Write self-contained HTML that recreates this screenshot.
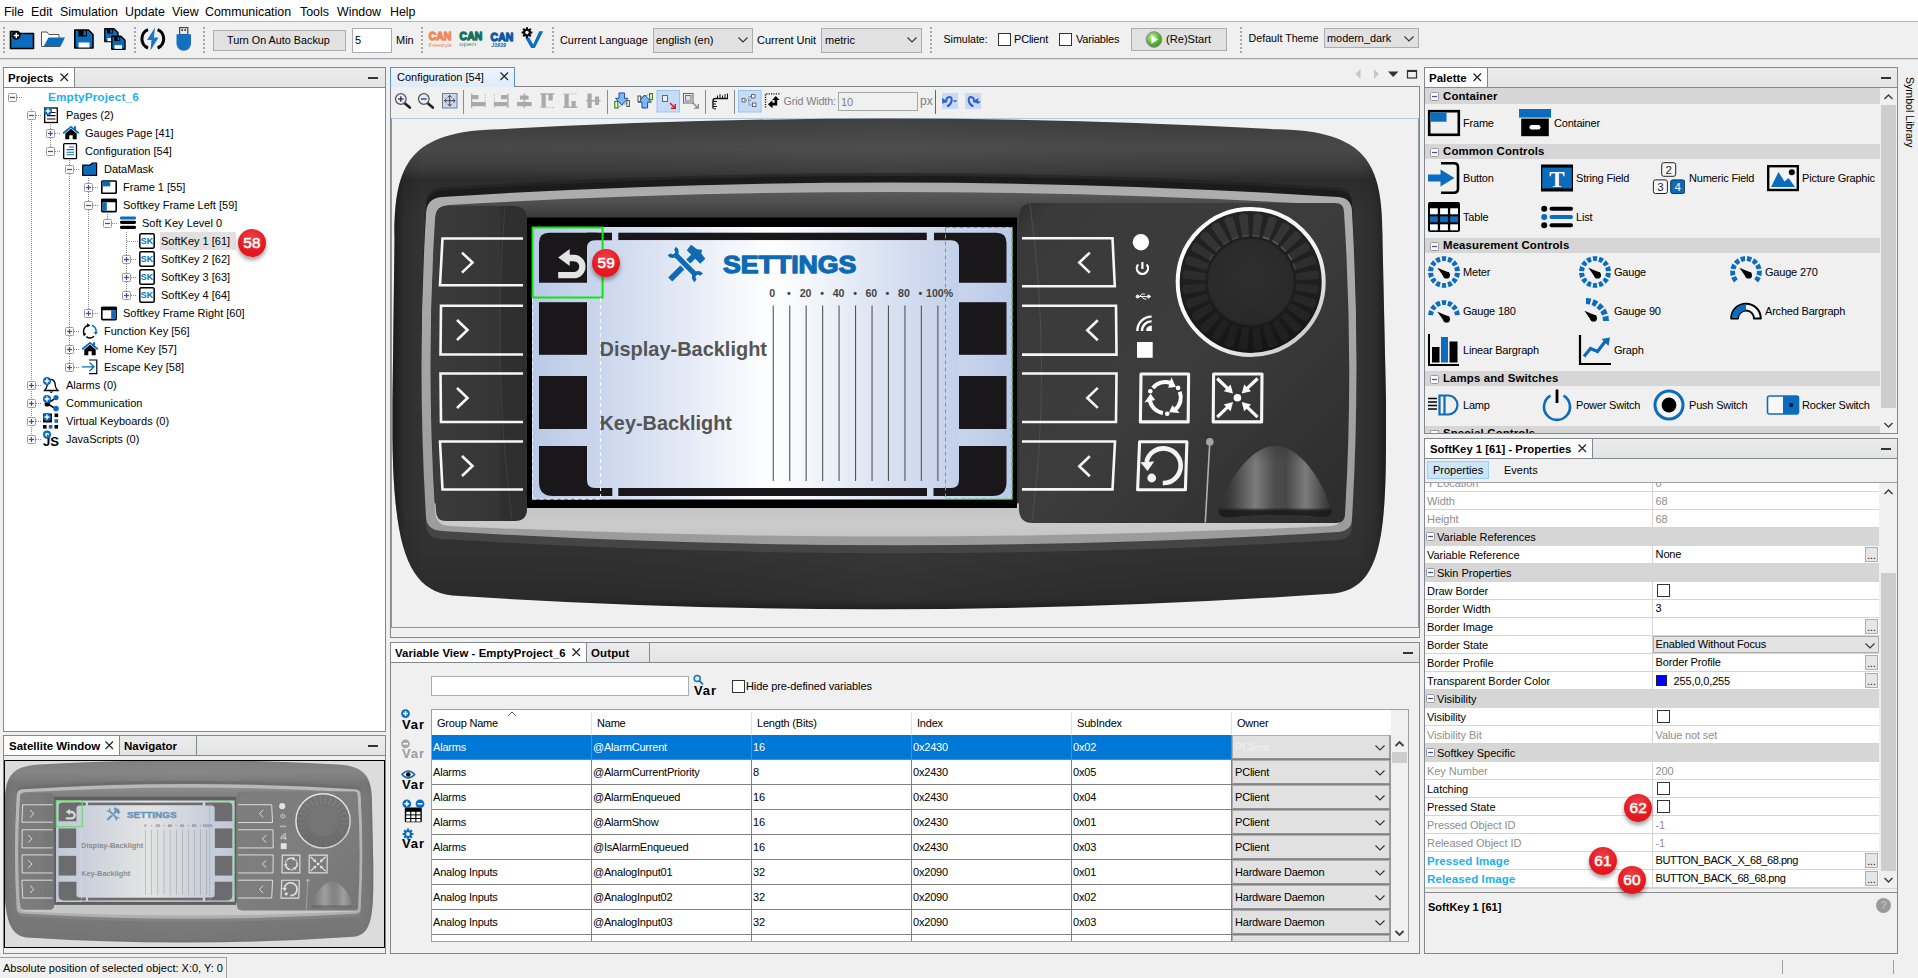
<!DOCTYPE html><html><head><meta charset="utf-8"><title>UI</title><style>
*{box-sizing:border-box;margin:0;padding:0}
html,body{width:1918px;height:978px;overflow:hidden;background:#f0f0f0;font-family:"Liberation Sans",sans-serif;font-size:11px;color:#000}
.a{position:absolute}
.t{position:absolute;white-space:pre;line-height:14px;height:14px}
.b{font-weight:bold}
.menu{position:absolute;left:0;top:0;width:1918px;height:21px;background:#fff}
.menu span{position:absolute;top:4px;font-size:12.4px;line-height:16px;white-space:pre}
.panel{position:absolute;border:1px solid #828790;background:#fff}
.tabhdr{position:absolute;background:linear-gradient(#ececec,#e4e4e4);border-bottom:1px solid #828790}
.tab{position:absolute;background:#fff;border-right:1px solid #828790;font-weight:bold;font-size:11px}
.combo{position:absolute;background:#e1e1e1;border:1px solid #adadad}
.btn{position:absolute;background:#e1e1e1;border:1px solid #adadad;text-align:center}
.chk{position:absolute;width:13px;height:13px;border:1px solid #333;background:#fff}
  .bdg{position:absolute;width:28px;height:28px;border-radius:50%;background:radial-gradient(circle at 50% 32%,#ec4046 0,#e51a20 58%,#dd1016 100%);box-shadow:0 3px 4px rgba(0,0,0,.38);color:#fff;font-size:15.4px;line-height:28px;text-align:center;-webkit-text-stroke:.55px #fff;letter-spacing:.2px}
.sep{position:absolute;width:2px;border-left:2px dotted #a8a8a8}
</style></head><body>
<!-- MENU -->
<div class="menu">
<span style="left:4px">File</span><span style="left:31px">Edit</span><span style="left:60px">Simulation</span><span style="left:125px">Update</span><span style="left:172px">View</span><span style="left:205px">Communication</span><span style="left:300px">Tools</span><span style="left:337px">Window</span><span style="left:390px">Help</span>
</div>
<div class="a" style="left:0;top:21px;width:1918px;height:1px;background:#b4b4b4"></div>
<div class="a" style="left:0;top:58px;width:1918px;height:1px;background:#a6a6a6"></div>
<div class="a" style="left:0;top:59px;width:1918px;height:1px;background:#dcdcdc"></div>
<!-- TOOLBAR -->
<div class="sep" style="left:3px;top:27px;height:26px"></div>
<div class="sep" style="left:134px;top:27px;height:26px"></div>
<div class="sep" style="left:203px;top:27px;height:26px"></div>
<div class="sep" style="left:421px;top:27px;height:26px"></div>
<div class="sep" style="left:552px;top:27px;height:26px"></div>
<div class="sep" style="left:930px;top:27px;height:26px"></div>
<div class="sep" style="left:1240px;top:27px;height:26px"></div>
<svg class="a" style="left:0;top:22px" width="200" height="36" viewBox="0 22 200 36">
 <!-- new project -->
 <path d="M10.5 31.5 H18 L20 33.5 H33.5 V48.5 H10.5 Z" fill="#0b6cbd" stroke="#000" stroke-width="1.6" stroke-linejoin="round"/>
 <circle cx="16.3" cy="35.5" r="4.3" fill="#000"/>
 <path d="M13.6 35.5 H19 M16.3 32.8 V38.2" stroke="#fff" stroke-width="1.5"/>
 <!-- open -->
 <path d="M41.5 46.5 V32 H47 L49 34.5 H59 V38" fill="#fff" stroke="#555" stroke-width="1"/>
 <path d="M41.5 46.5 H44 L48 37.5 H59 V46.5 Z" fill="#fff"/>
 <path d="M43.5 46.5 L48.5 37.5 H65 L60.5 46.5 Z" fill="#0b6cbd"/>
 <path d="M41.5 46.5 H60" stroke="#555" stroke-width="1" fill="none"/>
 <!-- save -->
 <path d="M74.8 30 H88.5 L93 34.5 V48 H74.8 Z" fill="#0b6cbd" stroke="#000" stroke-width="1.6" stroke-linejoin="round"/>
 <rect x="78.5" y="30.5" width="8.5" height="6" fill="#000"/>
 <rect x="83.5" y="31" width="2.4" height="4.5" fill="#0b6cbd"/>
 <rect x="78.5" y="42.5" width="11" height="5" fill="#fff"/>
 <!-- save all -->
 <path d="M104.8 28.8 H114 L118 32.8 V41.5 H104.8 Z" fill="#0b6cbd" stroke="#000" stroke-width="1.4" stroke-linejoin="round"/>
 <rect x="107" y="29" width="6" height="4.5" fill="#000"/>
 <rect x="110.3" y="29.5" width="1.8" height="3.2" fill="#0b6cbd"/>
 <rect x="107.5" y="38" width="5" height="3.2" fill="#fff"/>
 <path d="M111.8 36.3 H121 L125 40.3 V49.2 H111.8 Z" fill="#0b6cbd" stroke="#000" stroke-width="1.4" stroke-linejoin="round"/>
 <rect x="114.2" y="36.6" width="6" height="4.5" fill="#000"/>
 <rect x="117.5" y="37" width="1.8" height="3.2" fill="#0b6cbd"/>
 <rect x="114.5" y="45.2" width="7.5" height="3.6" fill="#fff"/>
 <!-- lightning -->
 <path d="M148 29.6 A10 10 0 0 0 148 48" fill="none" stroke="#000" stroke-width="3"/>
 <path d="M157.6 29.6 A10 10 0 0 1 157.6 48" fill="none" stroke="#000" stroke-width="3"/>
 <path d="M155 27.5 L147 40 H151.5 L150.5 50.5 L158.5 37.5 H153.8 Z" fill="#1878c8"/>
 <!-- usb -->
 <rect x="179.6" y="27.6" width="8.2" height="7" fill="#e8e8e8" stroke="#444" stroke-width="1.2"/>
 <rect x="181.4" y="29.3" width="1.6" height="1.6" fill="#222"/><rect x="184.4" y="29.3" width="1.6" height="1.6" fill="#222"/>
 <path d="M176.5 34.2 H191 V43.5 A7.25 7.25 0 0 1 176.5 43.5 Z" fill="#1371c0"/>
</svg>
<div class="btn" style="left:213px;top:30px;width:133px;height:21px"></div>
<div class="t" style="left:227px;top:33px;font-size:10.8px">Turn On Auto Backup</div>
<div class="a" style="left:352px;top:28px;width:40px;height:25px;background:#fff;border:1px solid #abadb3"></div>
<div class="t" style="left:355px;top:33px">5</div>
<div class="t" style="left:396px;top:33px">Min</div>
<!-- CAN icons -->
<svg class="a" style="left:424px;top:24px" width="124" height="32" viewBox="424 24 124 32">
 <g font-family="Liberation Sans,sans-serif" font-weight="bold" font-size="11.6" stroke-linejoin="round" lengthAdjust="spacingAndGlyphs">
 <text x="428.8" y="40.3" fill="#f08a58" stroke="#f08a58" stroke-width="1.3" textLength="22.6" lengthAdjust="spacingAndGlyphs">CAN</text>
 <text x="459.6" y="40.3" fill="#167060" stroke="#167060" stroke-width="1.3" textLength="22.6" lengthAdjust="spacingAndGlyphs">CAN</text>
 <text x="490.6" y="40.9" fill="#1058a8" stroke="#1058a8" stroke-width="1.3" textLength="22.6" lengthAdjust="spacingAndGlyphs">CAN</text>
 </g>
 <text x="428.8" y="46.6" font-family="Liberation Sans,sans-serif" font-size="5.2" fill="#f08050" textLength="23" lengthAdjust="spacingAndGlyphs">Freestyle</text>
 <text x="459.2" y="46.4" font-family="Liberation Sans,sans-serif" font-size="6" fill="#3c9080" textLength="17" lengthAdjust="spacingAndGlyphs">open</text>
 <text x="491.2" y="46.8" font-family="Liberation Sans,sans-serif" font-weight="bold" font-style="italic" font-size="5.4" fill="#1058a8" textLength="14.8" lengthAdjust="spacingAndGlyphs">J1939</text>
 <!-- gear V -->
 <path d="M525 37.6 H529.2 L533.2 44.4 L539.2 31.2 H543.2 L534.8 48 H531.2 Z" fill="#0a70c4"/>
 <g><circle cx="527" cy="32.6" r="3.9" fill="#000"/><path d="M527 27.2 V38 M521.6 32.6 H532.4 M523.2 28.8 L530.8 36.4 M530.8 28.8 L523.2 36.4" stroke="#000" stroke-width="2"/></g>
 <circle cx="527" cy="32.6" r="1.8" fill="#f0f0f0"/>
</svg>
<div class="t" style="left:560px;top:33px;font-size:10.9px">Current Language</div>
<div class="combo" style="left:653px;top:28px;width:100px;height:25px"></div>
<div class="t" style="left:656px;top:33px;font-size:11px">english (en)</div>
<svg class="a" style="left:737px;top:36px" width="12" height="8"><path d="M1.5 1.5 L6 6 L10.5 1.5" fill="none" stroke="#333" stroke-width="1.1"/></svg>
<div class="t" style="left:757px;top:33px;letter-spacing:-.02px">Current Unit</div>
<div class="combo" style="left:821px;top:28px;width:101px;height:25px"></div>
<div class="t" style="left:825px;top:33px;font-size:11px">metric</div>
<svg class="a" style="left:906px;top:36px" width="12" height="8"><path d="M1.5 1.5 L6 6 L10.5 1.5" fill="none" stroke="#333" stroke-width="1.1"/></svg>
<div class="t" style="left:943.5px;top:32px;font-size:10.6px">Simulate:</div>
<div class="chk" style="left:998px;top:33px"></div>
<div class="t" style="left:1014px;top:32px;letter-spacing:-.2px">PClient</div>
<div class="chk" style="left:1059px;top:33px"></div>
<div class="t" style="left:1076px;top:32px;letter-spacing:-.2px">Variables</div>
<div class="btn" style="left:1131px;top:28px;width:96px;height:23px"></div>
<svg class="a" style="left:1144px;top:30px" width="20" height="20"><defs><radialGradient id="gb" cx=".4" cy=".35" r=".7"><stop offset="0" stop-color="#c8f0a0"/><stop offset=".6" stop-color="#58b838"/><stop offset="1" stop-color="#3a8a28"/></radialGradient></defs><circle cx="10" cy="9.5" r="7.8" fill="url(#gb)" stroke="#8a8a8a" stroke-width="1"/><path d="M7.5 5.3 L14 9.5 L7.5 13.7 Z" fill="#fff" opacity=".95"/></svg>
<div class="t" style="left:1166px;top:32px;font-size:11.1px">(Re)Start</div>
<div class="t" style="left:1248.5px;top:31px;font-size:10.7px">Default Theme</div>
<div class="combo" style="left:1324px;top:28px;width:95px;height:20px"></div>
<div class="t" style="left:1327px;top:31px;font-size:10.9px">modern_dark</div>
<svg class="a" style="left:1403px;top:35px" width="12" height="8"><path d="M1.5 1.5 L6 6 L10.5 1.5" fill="none" stroke="#333" stroke-width="1.1"/></svg>
<!-- STATUS BAR -->
<div class="a" style="left:0;top:957px;width:227px;height:21px;border-top:1px solid #a0a0a0;border-right:1px solid #a0a0a0"></div>
<div class="t" style="left:3px;top:961px">Absolute position of selected object: X:0, Y: 0</div>
<div class="a" style="left:1782px;top:960px;width:1px;height:14px;background:#a0a0a0"></div>
<div class="a" style="left:1893px;top:960px;width:1px;height:14px;background:#a0a0a0"></div>
<!-- Symbol library -->
<div class="a" style="left:1899px;top:72px;width:19px;height:80px"><div style="position:absolute;left:18px;top:5px;transform-origin:0 0;transform:rotate(90deg);white-space:pre;font-size:10.6px;line-height:14px">Symbol Library</div></div>

<!-- PROJECTS PANEL -->
<div class="panel" style="left:3px;top:67px;width:383px;height:665px"></div>
<div class="tabhdr" style="left:4px;top:68px;width:381px;height:20px"></div>
<div class="tab" style="left:4px;top:68px;width:71px;height:19px"></div>
<div class="t b" style="left:8px;top:71px;font-size:11.5px">Projects</div>
<svg class="a" style="left:59px;top:72px" width="11" height="11"><path d="M1.5 1.5 L9 9 M9 1.5 L1.5 9" stroke="#222" stroke-width="1.2"/></svg>
<div class="a" style="left:368px;top:77px;width:10px;height:2px;background:#333"></div>
<div class="a" style="left:31px;top:109px;width:1px;height:330px;background:repeating-linear-gradient(180deg,#8a8a8a 0 1px,transparent 1px 2px)"></div>
<div class="a" style="left:50px;top:124px;width:1px;height:27px;background:repeating-linear-gradient(180deg,#8a8a8a 0 1px,transparent 1px 2px)"></div>
<div class="a" style="left:69px;top:160px;width:1px;height:207px;background:repeating-linear-gradient(180deg,#8a8a8a 0 1px,transparent 1px 2px)"></div>
<div class="a" style="left:88px;top:178px;width:1px;height:135px;background:repeating-linear-gradient(180deg,#8a8a8a 0 1px,transparent 1px 2px)"></div>
<div class="a" style="left:107px;top:214px;width:1px;height:9px;background:repeating-linear-gradient(180deg,#8a8a8a 0 1px,transparent 1px 2px)"></div>
<div class="a" style="left:126px;top:232px;width:1px;height:63px;background:repeating-linear-gradient(180deg,#8a8a8a 0 1px,transparent 1px 2px)"></div>
<div class="a" style="left:160px;top:232px;width:76px;height:18px;background:#e0e0e0"></div>
<div class="a" style="left:17px;top:97px;width:5px;height:1px;background:repeating-linear-gradient(90deg,#8a8a8a 0 1px,transparent 1px 2px)"></div>
<svg class="a" style="left:8px;top:93px" width="9" height="9"><rect x=".5" y=".5" width="8" height="8" rx="1" fill="#fafafa" stroke="#9a9a9a"/><path d="M2 4.5H7" stroke="#3a50a0" stroke-width="1.2"/></svg>
<div class="t b" style="left:48px;top:90px;color:#1cb0f0;font-size:11.8px;letter-spacing:.12px">EmptyProject_6</div>
<div class="a" style="left:36px;top:115px;width:6px;height:1px;background:repeating-linear-gradient(90deg,#8a8a8a 0 1px,transparent 1px 2px)"></div>
<svg class="a" style="left:27px;top:111px" width="9" height="9"><rect x=".5" y=".5" width="8" height="8" rx="1" fill="#fafafa" stroke="#9a9a9a"/><path d="M2 4.5H7" stroke="#3a50a0" stroke-width="1.2"/></svg>
<svg class="a" style="left:43px;top:106px" width="18" height="18" viewBox="0 0 18 18"><rect x="1.7" y="2" width="12.6" height="14.5" fill="#fff" stroke="#000" stroke-width="1.3"/><path d="M8 6.5H12.5M4 9.7H12.5M4 13H12.5" stroke="#000" stroke-width="1.2"/><circle cx="5" cy="5" r="4" fill="#0b6cbd"/><path d="M2.6 5H7.4M5 2.6V7.4" stroke="#fff" stroke-width="1.4"/></svg>
<div class="t" style="left:66px;top:108px">Pages (2)</div>
<div class="a" style="left:55px;top:133px;width:6px;height:1px;background:repeating-linear-gradient(90deg,#8a8a8a 0 1px,transparent 1px 2px)"></div>
<svg class="a" style="left:46px;top:129px" width="9" height="9"><rect x=".5" y=".5" width="8" height="8" rx="1" fill="#fafafa" stroke="#9a9a9a"/><path d="M2 4.5H7" stroke="#3a50a0" stroke-width="1.2"/><path d="M4.5 2V7" stroke="#3a50a0" stroke-width="1.2"/></svg>
<svg class="a" style="left:62px;top:124px" width="18" height="18" viewBox="0 0 18 18"><path d="M13 2.2V6" stroke="#0b6cbd" stroke-width="2"/><path d="M1.2 9.3 L9 2.8 L16.8 9.3" fill="none" stroke="#0b6cbd" stroke-width="1.8"/><path d="M3.3 9.4 L9 4.8 L14.7 9.4 V15.3 H10.7 V11.2 H7.3 V15.3 H3.3 Z" fill="#000"/></svg>
<div class="t" style="left:85px;top:126px">Gauges Page [41]</div>
<div class="a" style="left:55px;top:151px;width:6px;height:1px;background:repeating-linear-gradient(90deg,#8a8a8a 0 1px,transparent 1px 2px)"></div>
<svg class="a" style="left:46px;top:147px" width="9" height="9"><rect x=".5" y=".5" width="8" height="8" rx="1" fill="#fafafa" stroke="#9a9a9a"/><path d="M2 4.5H7" stroke="#3a50a0" stroke-width="1.2"/></svg>
<svg class="a" style="left:62px;top:142px" width="18" height="18" viewBox="0 0 18 18"><rect x="1.7" y="1.7" width="12.8" height="15" fill="#fff" stroke="#000" stroke-width="1.3" rx=".8"/><path d="M7 5H12M4.5 7.6H12M4.5 10.2H12M4.5 12.8H12" stroke="#0b6cbd" stroke-width="1.1"/></svg>
<div class="t" style="left:85px;top:144px">Configuration [54]</div>
<div class="a" style="left:74px;top:169px;width:6px;height:1px;background:repeating-linear-gradient(90deg,#8a8a8a 0 1px,transparent 1px 2px)"></div>
<svg class="a" style="left:65px;top:165px" width="9" height="9"><rect x=".5" y=".5" width="8" height="8" rx="1" fill="#fafafa" stroke="#9a9a9a"/><path d="M2 4.5H7" stroke="#3a50a0" stroke-width="1.2"/></svg>
<svg class="a" style="left:81px;top:160px" width="18" height="18" viewBox="0 0 18 18"><path d="M1.7 5.2 H9 L11.5 3 H15.6 V15.3 H1.7 Z" fill="#0b6cbd" stroke="#000" stroke-width="1.2" stroke-linejoin="round"/></svg>
<div class="t" style="left:104px;top:162px">DataMask</div>
<div class="a" style="left:93px;top:187px;width:6px;height:1px;background:repeating-linear-gradient(90deg,#8a8a8a 0 1px,transparent 1px 2px)"></div>
<svg class="a" style="left:84px;top:183px" width="9" height="9"><rect x=".5" y=".5" width="8" height="8" rx="1" fill="#fafafa" stroke="#9a9a9a"/><path d="M2 4.5H7" stroke="#3a50a0" stroke-width="1.2"/><path d="M4.5 2V7" stroke="#3a50a0" stroke-width="1.2"/></svg>
<svg class="a" style="left:100px;top:178px" width="18" height="18" viewBox="0 0 18 18"><rect x="1.8" y="3" width="14.4" height="12.2" fill="#fff" stroke="#000" stroke-width="1.6" rx=".8"/><rect x="2.6" y="3.8" width="7.6" height="4.6" fill="#0b6cbd"/></svg>
<div class="t" style="left:123px;top:180px">Frame 1 [55]</div>
<div class="a" style="left:93px;top:205px;width:6px;height:1px;background:repeating-linear-gradient(90deg,#8a8a8a 0 1px,transparent 1px 2px)"></div>
<svg class="a" style="left:84px;top:201px" width="9" height="9"><rect x=".5" y=".5" width="8" height="8" rx="1" fill="#fafafa" stroke="#9a9a9a"/><path d="M2 4.5H7" stroke="#3a50a0" stroke-width="1.2"/></svg>
<svg class="a" style="left:100px;top:196px" width="18" height="18" viewBox="0 0 18 18"><rect x="1.8" y="3.6" width="14.4" height="12" fill="#fff" stroke="#000" stroke-width="1.6" rx=".8"/><rect x="1" y="2.8" width="16" height="3.4" fill="#000" rx=".6"/><rect x="2.6" y="6.2" width="4.2" height="8.6" fill="#0b6cbd"/></svg>
<div class="t" style="left:123px;top:198px">Softkey Frame Left [59]</div>
<div class="a" style="left:112px;top:223px;width:6px;height:1px;background:repeating-linear-gradient(90deg,#8a8a8a 0 1px,transparent 1px 2px)"></div>
<svg class="a" style="left:103px;top:219px" width="9" height="9"><rect x=".5" y=".5" width="8" height="8" rx="1" fill="#fafafa" stroke="#9a9a9a"/><path d="M2 4.5H7" stroke="#3a50a0" stroke-width="1.2"/></svg>
<svg class="a" style="left:119px;top:214px" width="18" height="18" viewBox="0 0 18 18"><rect x="1" y="2.6" width="16" height="2.8" rx="1.2" fill="#0b6cbd"/><rect x="1" y="6.7" width="16" height="3.3" rx="1.4" fill="#000"/><rect x="1" y="11.7" width="16" height="3.3" rx="1.4" fill="#000"/></svg>
<div class="t" style="left:142px;top:216px">Soft Key Level 0</div>
<div class="a" style="left:127px;top:241px;width:11px;height:1px;background:repeating-linear-gradient(90deg,#8a8a8a 0 1px,transparent 1px 2px)"></div>
<svg class="a" style="left:138px;top:232px" width="18" height="18" viewBox="0 0 18 18"><rect x="1.8" y="1.8" width="14.4" height="14.4" fill="#fff" stroke="#000" stroke-width="1.5" rx="1.5"/><text x="2.8" y="12.4" font-family="Liberation Sans,sans-serif" font-weight="bold" font-size="9.2" fill="#0b6cbd" textLength="12.4" lengthAdjust="spacingAndGlyphs">SK</text></svg>
<div class="t" style="left:161px;top:234px">SoftKey 1 [61]</div>
<div class="a" style="left:131px;top:259px;width:6px;height:1px;background:repeating-linear-gradient(90deg,#8a8a8a 0 1px,transparent 1px 2px)"></div>
<svg class="a" style="left:122px;top:255px" width="9" height="9"><rect x=".5" y=".5" width="8" height="8" rx="1" fill="#fafafa" stroke="#9a9a9a"/><path d="M2 4.5H7" stroke="#3a50a0" stroke-width="1.2"/><path d="M4.5 2V7" stroke="#3a50a0" stroke-width="1.2"/></svg>
<svg class="a" style="left:138px;top:250px" width="18" height="18" viewBox="0 0 18 18"><rect x="1.8" y="1.8" width="14.4" height="14.4" fill="#fff" stroke="#000" stroke-width="1.5" rx="1.5"/><text x="2.8" y="12.4" font-family="Liberation Sans,sans-serif" font-weight="bold" font-size="9.2" fill="#0b6cbd" textLength="12.4" lengthAdjust="spacingAndGlyphs">SK</text></svg>
<div class="t" style="left:161px;top:252px">SoftKey 2 [62]</div>
<div class="a" style="left:131px;top:277px;width:6px;height:1px;background:repeating-linear-gradient(90deg,#8a8a8a 0 1px,transparent 1px 2px)"></div>
<svg class="a" style="left:122px;top:273px" width="9" height="9"><rect x=".5" y=".5" width="8" height="8" rx="1" fill="#fafafa" stroke="#9a9a9a"/><path d="M2 4.5H7" stroke="#3a50a0" stroke-width="1.2"/><path d="M4.5 2V7" stroke="#3a50a0" stroke-width="1.2"/></svg>
<svg class="a" style="left:138px;top:268px" width="18" height="18" viewBox="0 0 18 18"><rect x="1.8" y="1.8" width="14.4" height="14.4" fill="#fff" stroke="#000" stroke-width="1.5" rx="1.5"/><text x="2.8" y="12.4" font-family="Liberation Sans,sans-serif" font-weight="bold" font-size="9.2" fill="#0b6cbd" textLength="12.4" lengthAdjust="spacingAndGlyphs">SK</text></svg>
<div class="t" style="left:161px;top:270px">SoftKey 3 [63]</div>
<div class="a" style="left:131px;top:295px;width:6px;height:1px;background:repeating-linear-gradient(90deg,#8a8a8a 0 1px,transparent 1px 2px)"></div>
<svg class="a" style="left:122px;top:291px" width="9" height="9"><rect x=".5" y=".5" width="8" height="8" rx="1" fill="#fafafa" stroke="#9a9a9a"/><path d="M2 4.5H7" stroke="#3a50a0" stroke-width="1.2"/><path d="M4.5 2V7" stroke="#3a50a0" stroke-width="1.2"/></svg>
<svg class="a" style="left:138px;top:286px" width="18" height="18" viewBox="0 0 18 18"><rect x="1.8" y="1.8" width="14.4" height="14.4" fill="#fff" stroke="#000" stroke-width="1.5" rx="1.5"/><text x="2.8" y="12.4" font-family="Liberation Sans,sans-serif" font-weight="bold" font-size="9.2" fill="#0b6cbd" textLength="12.4" lengthAdjust="spacingAndGlyphs">SK</text></svg>
<div class="t" style="left:161px;top:288px">SoftKey 4 [64]</div>
<div class="a" style="left:93px;top:313px;width:6px;height:1px;background:repeating-linear-gradient(90deg,#8a8a8a 0 1px,transparent 1px 2px)"></div>
<svg class="a" style="left:84px;top:309px" width="9" height="9"><rect x=".5" y=".5" width="8" height="8" rx="1" fill="#fafafa" stroke="#9a9a9a"/><path d="M2 4.5H7" stroke="#3a50a0" stroke-width="1.2"/><path d="M4.5 2V7" stroke="#3a50a0" stroke-width="1.2"/></svg>
<svg class="a" style="left:100px;top:304px" width="18" height="18" viewBox="0 0 18 18"><rect x="1.8" y="3.6" width="14.4" height="12" fill="#fff" stroke="#000" stroke-width="1.6" rx=".8"/><rect x="1" y="2.8" width="16" height="3.4" fill="#000" rx=".6"/><rect x="11.2" y="6.2" width="4.2" height="8.6" fill="#0b6cbd"/></svg>
<div class="t" style="left:123px;top:306px">Softkey Frame Right [60]</div>
<div class="a" style="left:74px;top:331px;width:6px;height:1px;background:repeating-linear-gradient(90deg,#8a8a8a 0 1px,transparent 1px 2px)"></div>
<svg class="a" style="left:65px;top:327px" width="9" height="9"><rect x=".5" y=".5" width="8" height="8" rx="1" fill="#fafafa" stroke="#9a9a9a"/><path d="M2 4.5H7" stroke="#3a50a0" stroke-width="1.2"/><path d="M4.5 2V7" stroke="#3a50a0" stroke-width="1.2"/></svg>
<svg class="a" style="left:81px;top:322px" width="18" height="18" viewBox="0 0 18 18"><path d="M7.2 3.3 A6 6 0 0 0 3.6 12.6" fill="none" stroke="#000" stroke-width="1.5"/><path d="M5.3 14.6 A6 6 0 0 0 13 14.2" fill="none" stroke="#000" stroke-width="1.5"/><path d="M10.8 3.3 A6 6 0 0 1 15 10.5" fill="none" stroke="#0b6cbd" stroke-width="1.5"/><path d="M6 1.2 L9.4 3.2 L6.4 5.6 Z" fill="#000"/><path d="M12.8 10 L16.8 10 L14.8 13 Z" fill="#0b6cbd"/><path d="M1.8 11.2 L5.4 11.6 L3 14.4Z" fill="#000"/></svg>
<div class="t" style="left:104px;top:324px">Function Key [56]</div>
<div class="a" style="left:74px;top:349px;width:6px;height:1px;background:repeating-linear-gradient(90deg,#8a8a8a 0 1px,transparent 1px 2px)"></div>
<svg class="a" style="left:65px;top:345px" width="9" height="9"><rect x=".5" y=".5" width="8" height="8" rx="1" fill="#fafafa" stroke="#9a9a9a"/><path d="M2 4.5H7" stroke="#3a50a0" stroke-width="1.2"/><path d="M4.5 2V7" stroke="#3a50a0" stroke-width="1.2"/></svg>
<svg class="a" style="left:81px;top:340px" width="18" height="18" viewBox="0 0 18 18"><path d="M13 2.2V6" stroke="#0b6cbd" stroke-width="2"/><path d="M1.2 9.3 L9 2.8 L16.8 9.3" fill="none" stroke="#0b6cbd" stroke-width="1.8"/><path d="M3.3 9.4 L9 4.8 L14.7 9.4 V15.3 H10.7 V11.2 H7.3 V15.3 H3.3 Z" fill="#000"/></svg>
<div class="t" style="left:104px;top:342px">Home Key [57]</div>
<div class="a" style="left:74px;top:367px;width:6px;height:1px;background:repeating-linear-gradient(90deg,#8a8a8a 0 1px,transparent 1px 2px)"></div>
<svg class="a" style="left:65px;top:363px" width="9" height="9"><rect x=".5" y=".5" width="8" height="8" rx="1" fill="#fafafa" stroke="#9a9a9a"/><path d="M2 4.5H7" stroke="#3a50a0" stroke-width="1.2"/><path d="M4.5 2V7" stroke="#3a50a0" stroke-width="1.2"/></svg>
<svg class="a" style="left:81px;top:358px" width="18" height="18" viewBox="0 0 18 18"><path d="M8 2 H15.8 V15.6 H8" fill="none" stroke="#000" stroke-width="1.2"/><path d="M1 8.8 H13 M8.5 4.5 L13 8.8 L8.5 13.2" fill="none" stroke="#0b6cbd" stroke-width="1.3"/></svg>
<div class="t" style="left:104px;top:360px">Escape Key [58]</div>
<div class="a" style="left:36px;top:385px;width:6px;height:1px;background:repeating-linear-gradient(90deg,#8a8a8a 0 1px,transparent 1px 2px)"></div>
<svg class="a" style="left:27px;top:381px" width="9" height="9"><rect x=".5" y=".5" width="8" height="8" rx="1" fill="#fafafa" stroke="#9a9a9a"/><path d="M2 4.5H7" stroke="#3a50a0" stroke-width="1.2"/><path d="M4.5 2V7" stroke="#3a50a0" stroke-width="1.2"/></svg>
<svg class="a" style="left:42px;top:376px" width="18" height="18" viewBox="0 0 18 18"><path d="M9 3.5 C5.5 3.5 5.2 7 5 10 C4.8 12.5 3.2 13.5 2.5 14.5 H16 C15.2 13.5 13.6 12.5 13.4 10 C13.2 7 12.5 3.5 9 3.5 Z" fill="#fff" stroke="#000" stroke-width="1.3"/><path d="M7.5 15.5 A1.8 1.8 0 0 0 11 15.5" fill="#000"/><circle cx="5" cy="5" r="4" fill="#0b6cbd"/><path d="M2.6 5H7.4M5 2.6V7.4" stroke="#fff" stroke-width="1.4"/></svg>
<div class="t" style="left:66px;top:378px">Alarms (0)</div>
<div class="a" style="left:36px;top:403px;width:6px;height:1px;background:repeating-linear-gradient(90deg,#8a8a8a 0 1px,transparent 1px 2px)"></div>
<svg class="a" style="left:27px;top:399px" width="9" height="9"><rect x=".5" y=".5" width="8" height="8" rx="1" fill="#fafafa" stroke="#9a9a9a"/><path d="M2 4.5H7" stroke="#3a50a0" stroke-width="1.2"/><path d="M4.5 2V7" stroke="#3a50a0" stroke-width="1.2"/></svg>
<svg class="a" style="left:42px;top:394px" width="18" height="18" viewBox="0 0 18 18"><path d="M14 4 L5 9.5 L14 15" fill="none" stroke="#000" stroke-width="1.5"/><circle cx="5.2" cy="10" r="2.6" fill="#000"/><circle cx="14" cy="3.6" r="2.6" fill="#0b6cbd"/><circle cx="14" cy="14.6" r="2.8" fill="#0b6cbd"/><circle cx="5" cy="5" r="4" fill="#0b6cbd"/><path d="M2.6 5H7.4M5 2.6V7.4" stroke="#fff" stroke-width="1.4"/></svg>
<div class="t" style="left:66px;top:396px">Communication</div>
<div class="a" style="left:36px;top:421px;width:6px;height:1px;background:repeating-linear-gradient(90deg,#8a8a8a 0 1px,transparent 1px 2px)"></div>
<svg class="a" style="left:27px;top:417px" width="9" height="9"><rect x=".5" y=".5" width="8" height="8" rx="1" fill="#fafafa" stroke="#9a9a9a"/><path d="M2 4.5H7" stroke="#3a50a0" stroke-width="1.2"/><path d="M4.5 2V7" stroke="#3a50a0" stroke-width="1.2"/></svg>
<svg class="a" style="left:42px;top:412px" width="18" height="18" viewBox="0 0 18 18"><rect x="1" y="1.5" width="9" height="9" fill="#000"/><rect x="12.5" y="1.5" width="3.6" height="3.6" fill="#000"/><rect x="12.5" y="7.2" width="3.6" height="3.6" fill="#0b6cbd"/><rect x="1" y="13" width="3.6" height="3.6" fill="#000"/><rect x="6.8" y="13" width="3.6" height="3.6" fill="#0b6cbd"/><rect x="12.5" y="13" width="3.6" height="3.6" fill="#000"/><circle cx="5" cy="5" r="4" fill="#0b6cbd"/><path d="M2.6 5H7.4M5 2.6V7.4" stroke="#fff" stroke-width="1.4"/></svg>
<div class="t" style="left:66px;top:414px">Virtual Keyboards (0)</div>
<div class="a" style="left:36px;top:439px;width:6px;height:1px;background:repeating-linear-gradient(90deg,#8a8a8a 0 1px,transparent 1px 2px)"></div>
<svg class="a" style="left:27px;top:435px" width="9" height="9"><rect x=".5" y=".5" width="8" height="8" rx="1" fill="#fafafa" stroke="#9a9a9a"/><path d="M2 4.5H7" stroke="#3a50a0" stroke-width="1.2"/><path d="M4.5 2V7" stroke="#3a50a0" stroke-width="1.2"/></svg>
<svg class="a" style="left:42px;top:430px" width="18" height="18" viewBox="0 0 18 18"><text x="1" y="16.3" font-family="Liberation Sans,sans-serif" font-weight="bold" font-size="13.5" fill="#000" textLength="16" lengthAdjust="spacingAndGlyphs">JS</text><circle cx="5" cy="4.6" r="4" fill="#0b6cbd"/><circle cx="5" cy="4.6" r="1.9" fill="#fff"/><path d="M5 4.6 L8 8.4" stroke="#0b6cbd" stroke-width="1.4"/></svg>
<div class="t" style="left:66px;top:432px">JavaScripts (0)</div>
<div class="bdg" style="left:238px;top:229px">58</div>
<!-- SATELLITE PANEL -->
<div class="panel" style="left:3px;top:735px;width:383px;height:219px;background:#f0f0f0"></div>
<div class="tabhdr" style="left:4px;top:736px;width:381px;height:20px"></div>
<div class="tab" style="left:4px;top:736px;width:116px;height:19px"></div>
<div class="t b" style="left:9px;top:739px;font-size:11.5px">Satellite Window</div>
<svg class="a" style="left:104px;top:740px" width="11" height="11"><path d="M1.5 1.5 L9 9 M9 1.5 L1.5 9" stroke="#222" stroke-width="1.2"/></svg>
<div class="a" style="left:120px;top:736px;width:77px;height:19px;border-right:1px solid #828790"></div>
<div class="t b" style="left:124px;top:739px;font-size:11.5px">Navigator</div>
<div class="a" style="left:368px;top:745px;width:10px;height:2px;background:#333"></div>
<div class="a" style="left:4px;top:760px;width:381px;height:188px;border:1px solid #000;background:#f0f0f0;overflow:hidden">
<svg class="a" style="left:-0.8px;top:-1px" width="381.2" height="189.5" viewBox="392 118 1026 510"><use href="#dev" x="392" y="118" width="1026" height="510"/><rect x="532.6" y="227.5" width="70" height="70" fill="none" stroke="#12e612" stroke-width="3"/><path d="M600.6 298 V497" stroke="#fff" stroke-width="2" stroke-dasharray="4 3"/><path d="M532.5 499 H600" stroke="#fff" stroke-width="2.4" stroke-dasharray="4 3"/><rect x="945.5" y="227.5" width="66.5" height="271.5" fill="none" stroke="#20e020" stroke-width="2.4" stroke-dasharray="4 3"/></svg>
<div class="a" style="left:0;top:0;width:381px;height:188px;background:rgba(198,198,198,.48)"></div>
</div>
<svg class="a" style="left:0;top:0;width:0;height:0" width="0" height="0"><symbol id="dev" viewBox="392 118 1026 510" overflow="visible"><defs>
<linearGradient id="gBody" x1="0" y1="118" x2="0" y2="609" gradientUnits="userSpaceOnUse">
<stop offset="0" stop-color="#3b3b3b"/><stop offset=".063" stop-color="#494949"/><stop offset=".105" stop-color="#3b3b3b"/><stop offset=".125" stop-color="#2c2c2c"/>
<stop offset=".2" stop-color="#333"/><stop offset=".8" stop-color="#333"/>
<stop offset=".89" stop-color="#303030"/><stop offset=".98" stop-color="#2a2a2a"/><stop offset="1" stop-color="#1b1b1b"/></linearGradient>
<linearGradient id="gSide" x1="393" y1="0" x2="1387" y2="0" gradientUnits="userSpaceOnUse">
<stop offset="0" stop-color="#000" stop-opacity=".45"/><stop offset=".012" stop-color="#000" stop-opacity=".1"/><stop offset=".03" stop-color="#000" stop-opacity="0"/><stop offset=".5" stop-color="#fff" stop-opacity=".03"/><stop offset=".97" stop-color="#000" stop-opacity="0"/><stop offset=".988" stop-color="#000" stop-opacity=".1"/><stop offset="1" stop-color="#000" stop-opacity=".45"/></linearGradient>
<linearGradient id="gBezel" x1="0" y1="182" x2="0" y2="546" gradientUnits="userSpaceOnUse">
<stop offset="0" stop-color="#a6a6a6"/><stop offset=".03" stop-color="#adadad"/><stop offset=".5" stop-color="#a4a4a4"/><stop offset="1" stop-color="#9b9b9b"/></linearGradient>
<linearGradient id="gInner" x1="0" y1="192" x2="0" y2="537" gradientUnits="userSpaceOnUse">
<stop offset="0" stop-color="#5a5a5a"/><stop offset=".035" stop-color="#4c4c4c"/><stop offset=".075" stop-color="#3a3a3a"/><stop offset=".9" stop-color="#303030"/><stop offset=".905" stop-color="#c4c4c4"/><stop offset=".96" stop-color="#cbcbcb"/><stop offset="1" stop-color="#c6c6c6"/></linearGradient>
<linearGradient id="gCol" x1="436" y1="0" x2="527" y2="0" gradientUnits="userSpaceOnUse">
<stop offset="0" stop-color="#3b3b3b"/><stop offset=".7" stop-color="#353535"/><stop offset=".72" stop-color="#2f2f2f"/><stop offset="1" stop-color="#2e2e2e"/></linearGradient>
<linearGradient id="gRP" x1="1019" y1="203" x2="1345" y2="523" gradientUnits="userSpaceOnUse">
<stop offset="0" stop-color="#2e2e2e"/><stop offset=".06" stop-color="#3a3a3a"/><stop offset=".5" stop-color="#3c3c3c"/><stop offset="1" stop-color="#2c2c2c"/></linearGradient>
<linearGradient id="gScr" x1="532" y1="0" x2="1012" y2="0" gradientUnits="userSpaceOnUse">
<stop offset="0" stop-color="#b9c9e7"/><stop offset=".5" stop-color="#fff"/><stop offset="1" stop-color="#b9c9e7"/></linearGradient>
<linearGradient id="gFrm" x1="587" y1="0" x2="959" y2="0" gradientUnits="userSpaceOnUse">
<stop offset="0" stop-color="#c6d3eb"/><stop offset=".5" stop-color="#fff"/><stop offset="1" stop-color="#c2d0ea"/></linearGradient>
<radialGradient id="gKnob" cx="1250" cy="275" r="60" gradientUnits="userSpaceOnUse"><stop offset="0" stop-color="#2e2e2e"/><stop offset=".7" stop-color="#2a2a2a"/><stop offset="1" stop-color="#242424"/></radialGradient>
<linearGradient id="gRing" x1="1190" y1="215" x2="1310" y2="350" gradientUnits="userSpaceOnUse"><stop offset="0" stop-color="#fff"/><stop offset=".6" stop-color="#f4f4f4"/><stop offset="1" stop-color="#c4c4c4"/></linearGradient>
<linearGradient id="gKnobR" x1="0" y1="207" x2="0" y2="357" gradientUnits="userSpaceOnUse"><stop offset="0" stop-color="#242424"/><stop offset=".5" stop-color="#1e1e1e"/><stop offset="1" stop-color="#141414"/></linearGradient>
<linearGradient id="gDome" x1="1218" y1="0" x2="1332" y2="0" gradientUnits="userSpaceOnUse"><stop offset="0" stop-color="#2e2e2e"/><stop offset=".1" stop-color="#3a3a3a"/><stop offset=".33" stop-color="#7c7c7c"/><stop offset=".5" stop-color="#4c4c4c"/><stop offset=".6" stop-color="#484848"/><stop offset=".77" stop-color="#7c7c7c"/><stop offset=".93" stop-color="#454545"/><stop offset="1" stop-color="#2e2e2e"/></linearGradient>
<linearGradient id="gDomeV" x1="0" y1="446" x2="0" y2="517.5" gradientUnits="userSpaceOnUse"><stop offset="0" stop-color="#333" stop-opacity=".35"/><stop offset=".25" stop-color="#333" stop-opacity="0"/><stop offset=".86" stop-color="#111" stop-opacity="0"/><stop offset=".91" stop-color="#181818" stop-opacity=".9"/><stop offset="1" stop-color="#1c1c1c" stop-opacity=".95"/></linearGradient>
</defs>
<path d="M392.5 400 L394.5 240 C394 165 408 131 500 129.3 Q888.5 107.7 1277 129.3 C1369 131 1383 165 1382.5 240 L1386 400 L1386 440 C1386 545 1378 588 1334 593.6 Q888 624 452 595.6 C408 590 394 548 392.5 440 Z" fill="url(#gBody)"/>
<path d="M392.5 400 L394.5 240 C394 165 408 131 500 129.3 Q888.5 107.7 1277 129.3 C1369 131 1383 165 1382.5 240 L1386 400 L1386 440 C1386 545 1378 588 1334 593.6 Q888 624 452 595.6 C408 590 394 548 392.5 440 Z" fill="url(#gSide)"/>
<path d="M426 215 Q426 198 442 197 Q890 168 1338 197 Q1352 198 1352 212 Q1361 365 1352 518 Q1352 531 1338 532 Q890 559 442 531 Q426 530 426 516 Q417 365 426 215 Z" fill="#1b1b1b" transform="translate(0,-6.5)"/>
<path d="M426 215 Q426 198 442 197 Q890 168 1338 197 Q1352 198 1352 212 Q1361 365 1352 518 Q1352 531 1338 532 Q890 559 442 531 Q426 530 426 516 Q417 365 426 215 Z" fill="#1b1b1b" opacity=".5" transform="translate(0,-9.5)"/>
<path d="M426 215 Q426 198 442 197 Q890 168 1338 197 Q1352 198 1352 212 Q1361 365 1352 518 Q1352 531 1338 532 Q890 559 442 531 Q426 530 426 516 Q417 365 426 215 Z" fill="#454545" transform="translate(0,8)"/>
<path d="M426 215 Q426 198 442 197 Q890 168 1338 197 Q1352 198 1352 212 Q1361 365 1352 518 Q1352 531 1338 532 Q890 559 442 531 Q426 530 426 516 Q417 365 426 215 Z" fill="url(#gBezel)"/>
<path d="M435 220 Q435 206 449 205 Q890 179 1331 205 Q1343 206 1343 218 Q1352 365 1343 512 Q1343 525 1331 526 Q890 547 449 526 Q435 525 435 510 Q426 365 435 220 Z" fill="url(#gInner)"/>
<path d="M446 206 H513 Q527 206 527 220 V509 Q527 521 515 521 H446 Q436 521 436 511 Q426 365 436 216 Q436 206 446 206 Z" fill="url(#gCol)"/>
<path d="M505 207 Q492 365 512 520" fill="none" stroke="#4a4a4a" stroke-width="1" opacity=".6"/>
<path d="M1033 203 H1335 Q1344 203 1344 212 Q1354 365 1345 514 Q1345 523 1336 523 H1033 Q1019 523 1019 509 V217 Q1019 203 1033 203 Z" fill="url(#gRP)"/>
<path d="M1030 204 Q1052 365 1032 522" fill="none" stroke="#555" stroke-width="1" opacity=".7"/>
<rect x="527" y="217.5" width="490" height="290.5" fill="#000"/>
<rect x="532" y="227" width="480.5" height="272.5" fill="url(#gScr)"/>
<path d="M549 232.7 H597 V282.7 H539 V242.7 Q539 232.7 549 232.7 Z" fill="#1a171b"/>
<rect x="539" y="302.2" width="48" height="52.6" fill="#1a171b"/>
<rect x="539" y="376" width="48" height="53" fill="#1a171b"/>
<path d="M539 446 H597 V478 H612.3 V496 H553 Q539 496 539 482 Z" fill="#1a171b"/>
<rect x="587" y="232.7" width="25" height="17.5" fill="#1a171b"/>
<rect x="618.3" y="232.7" width="308.5" height="7.5" fill="#1a171b"/>
<rect x="618.3" y="488" width="308.7" height="8" fill="#1a171b"/>
<path d="M934 232.7 H996.5 Q1006.5 232.7 1006.5 242.7 V282.7 H949 V250 H934 Z" fill="#1a171b"/>
<rect x="959" y="302.2" width="47.5" height="52.6" fill="#1a171b"/>
<rect x="959" y="376" width="47.5" height="53" fill="#1a171b"/>
<path d="M949 446 H1006.5 V482 Q1006.5 496 992.5 496 H933.5 V478 H949 Z" fill="#1a171b"/>
<path d="M595 240.2 H951 Q959 240.2 959 248 V480 Q959 488 951 488 H595 Q587 488 587 480 V248 Q587 240.2 595 240.2 Z" fill="url(#gFrm)"/>
<path d="M558.2 275.2 H573.8 A8.6 8.6 0 0 0 573.8 258 H569" fill="none" stroke="#e4e4e4" stroke-width="6.3"/><path d="M558.2 257.5 L569.7 249 V266 Z" fill="#e4e4e4"/>
<g transform="rotate(-45 685.3 264.5)" fill="#0f6ab4"><rect x="664" y="261.6" width="33" height="5.8"/><path d="M696.4 255.5 L703.4 254.5 L704.4 262 L707.5 266 L704.4 268 L703.6 274.5 H696.4 Z"/></g>
<g transform="rotate(45 685.3 264.5)"><path d="M668 264.5 H703" stroke="#eef2fa" stroke-width="8.4" fill="none"/><path d="M670 264.5 H700.6" stroke="#0f6ab4" stroke-width="5.2" fill="none"/><path d="M666.6 260.4 A4.2 4.2 0 1 1 666.6 268.6" fill="none" stroke="#0f6ab4" stroke-width="3.6"/><path d="M704 260.4 A4.2 4.2 0 1 0 704 268.6" fill="none" stroke="#0f6ab4" stroke-width="3.6"/></g>
<text x="723" y="273.2" font-family="Liberation Sans,sans-serif" font-weight="bold" font-size="24.6" fill="#0f6ab4" stroke="#0f6ab4" stroke-width="1.3" stroke-linejoin="round" textLength="133.4" lengthAdjust="spacingAndGlyphs">SETTINGS</text>
<text x="599.5" y="355.5" font-family="Liberation Sans,sans-serif" font-weight="bold" font-size="21" fill="#555" textLength="167.5" lengthAdjust="spacingAndGlyphs">Display-Backlight</text>
<text x="599.5" y="429.8" font-family="Liberation Sans,sans-serif" font-weight="bold" font-size="21" fill="#555" textLength="132.5" lengthAdjust="spacingAndGlyphs">Key-Backlight</text>
<text y="297.3" text-anchor="middle" font-family="Liberation Sans,sans-serif" font-weight="bold" font-size="10.6" fill="#444"><tspan x="772.3">0</tspan><tspan x="788.8">•</tspan><tspan x="805.6">20</tspan><tspan x="822.0">•</tspan><tspan x="838.6">40</tspan><tspan x="855.0">•</tspan><tspan x="871.3">60</tspan><tspan x="887.4">•</tspan><tspan x="904.0">80</tspan><tspan x="920.4">•</tspan><tspan x="939.6">100%</tspan></text>
<rect x="772.7" y="305.5" width="1.1" height="175.5" fill="#555"/>
<rect x="789.2" y="305.5" width="1.1" height="175.5" fill="#555"/>
<rect x="805.6" y="305.5" width="1.1" height="175.5" fill="#555"/>
<rect x="822.1" y="305.5" width="1.1" height="175.5" fill="#555"/>
<rect x="838.5" y="305.5" width="1.1" height="175.5" fill="#555"/>
<rect x="855.0" y="305.5" width="1.1" height="175.5" fill="#555"/>
<rect x="871.5" y="305.5" width="1.1" height="175.5" fill="#555"/>
<rect x="887.9" y="305.5" width="1.1" height="175.5" fill="#555"/>
<rect x="904.4" y="305.5" width="1.1" height="175.5" fill="#555"/>
<rect x="920.8" y="305.5" width="1.1" height="175.5" fill="#555"/>
<rect x="937.3" y="305.5" width="1.1" height="175.5" fill="#555"/>
<path d="M523 238.5 H442.5 L440.0 285.3 H523" stroke="#f6f6f6" stroke-width="2.6" fill="none"/>
<path d="M523 305.8 H441.0 L440.5 354.5 H523" stroke="#f6f6f6" stroke-width="2.6" fill="none"/>
<path d="M523 373.5 H440.5 L441.0 422.0 H523" stroke="#f6f6f6" stroke-width="2.6" fill="none"/>
<path d="M523 441.5 H440.0 L442.5 489.5 H523" stroke="#f6f6f6" stroke-width="2.6" fill="none"/>
<path d="M462.0 252.6 L472.5 262.6 L462.0 272.6" stroke="#f6f6f6" stroke-width="2.6" fill="none"/>
<path d="M457.0 320.0 L467.5 330.0 L457.0 340.0" stroke="#f6f6f6" stroke-width="2.6" fill="none"/>
<path d="M457.0 388.0 L467.5 398.0 L457.0 408.0" stroke="#f6f6f6" stroke-width="2.6" fill="none"/>
<path d="M462.0 456.0 L472.5 466.0 L462.0 476.0" stroke="#f6f6f6" stroke-width="2.6" fill="none"/>
<path d="M1022 238.3 H1112.5 L1114.8 286.3 H1022" stroke="#f6f6f6" stroke-width="2.6" fill="none"/>
<path d="M1022 305.8 H1116.0 L1116.5 354.6 H1022" stroke="#f6f6f6" stroke-width="2.6" fill="none"/>
<path d="M1022 373.5 H1116.5 L1116.0 422.0 H1022" stroke="#f6f6f6" stroke-width="2.6" fill="none"/>
<path d="M1022 441.5 H1115.0 L1112.5 489.4 H1022" stroke="#f6f6f6" stroke-width="2.6" fill="none"/>
<path d="M1089.8 252.6 L1079.3 262.6 L1089.8 272.6" stroke="#f6f6f6" stroke-width="2.6" fill="none"/>
<path d="M1097.8 320.2 L1087.3 330.2 L1097.8 340.2" stroke="#f6f6f6" stroke-width="2.6" fill="none"/>
<path d="M1097.8 387.9 L1087.3 397.9 L1097.8 407.9" stroke="#f6f6f6" stroke-width="2.6" fill="none"/>
<path d="M1089.8 456.2 L1079.3 466.2 L1089.8 476.2" stroke="#f6f6f6" stroke-width="2.6" fill="none"/>
<circle cx="1140.9" cy="242.2" r="8.2" fill="#fff"/>
<path d="M1138.2 264.6 A5.6 5.6 0 1 0 1146.6 264.6" fill="none" stroke="#fff" stroke-width="2.2"/><path d="M1142.4 262 V269" stroke="#fff" stroke-width="2.2"/>
<g stroke="#eee" fill="#eee"><path d="M1137 296.5 H1149" stroke-width="1.1" fill="none"/><circle cx="1137.6" cy="296.5" r="1.5"/><path d="M1148 294.8 L1150.8 296.5 L1148 298.2Z"/><path d="M1139.5 296.5 L1142 294 H1145" fill="none" stroke-width="1"/><path d="M1141.5 296.5 L1144 299 H1146.5" fill="none" stroke-width="1"/></g>
<g fill="none" stroke="#fff"><path d="M1137.4 331 A14 14 0 0 1 1151.6 316.6" stroke-width="2.4"/><path d="M1142 331 A9.5 9.5 0 0 1 1151.6 321.4" stroke-width="2.4"/></g><path d="M1146 331 A5.6 5.6 0 0 1 1151.8 325.4 V331 Z" fill="#fff"/>
<rect x="1137" y="342" width="15.7" height="15.8" fill="#fff"/>
<circle cx="1250.7" cy="281.9" r="72" fill="url(#gKnobR)"/>
<polygon points="1296.2,283.4 1318.1,284.9 1319.3,289.6 1317.1,294.0 1295.4,290.5" fill="#292929"/><polygon points="1294.7,293.5 1315.8,299.8 1315.8,304.7 1312.8,308.5 1292.3,300.2" fill="#272727"/><polygon points="1291.0,303.0 1310.2,313.8 1309.1,318.6 1305.3,321.6 1287.2,309.0" fill="#242424"/><polygon points="1285.3,311.5 1301.6,326.3 1299.5,330.7 1295.1,332.8 1280.3,316.5" fill="#222222"/><polygon points="1277.8,318.4 1290.4,336.5 1287.4,340.3 1282.6,341.4 1271.8,322.2" fill="#202020"/><polygon points="1269.0,323.5 1277.3,344.0 1273.5,347.0 1268.6,347.0 1262.3,325.9" fill="#1f1f1f"/><polygon points="1259.3,326.6 1262.8,348.3 1258.4,350.5 1253.7,349.3 1252.2,327.4" fill="#1f1f1f"/><polygon points="1249.2,327.4 1247.7,349.3 1243.0,350.5 1238.6,348.3 1242.1,326.6" fill="#1f1f1f"/><polygon points="1239.1,325.9 1232.8,347.0 1227.9,347.0 1224.1,344.0 1232.4,323.5" fill="#1f1f1f"/><polygon points="1229.6,322.2 1218.8,341.4 1214.0,340.3 1211.0,336.5 1223.6,318.4" fill="#202020"/><polygon points="1221.1,316.5 1206.3,332.8 1201.9,330.7 1199.8,326.3 1216.1,311.5" fill="#222222"/><polygon points="1214.2,309.0 1196.1,321.6 1192.3,318.6 1191.2,313.8 1210.4,303.0" fill="#242424"/><polygon points="1209.1,300.2 1188.6,308.5 1185.6,304.7 1185.6,299.8 1206.7,293.5" fill="#272727"/><polygon points="1206.0,290.5 1184.3,294.0 1182.1,289.6 1183.3,284.9 1205.2,283.4" fill="#292929"/><polygon points="1205.2,280.4 1183.3,278.9 1182.1,274.2 1184.3,269.8 1206.0,273.3" fill="#2c2c2c"/><polygon points="1206.7,270.3 1185.6,264.0 1185.6,259.1 1188.6,255.3 1209.1,263.6" fill="#2e2e2e"/><polygon points="1210.4,260.8 1191.2,250.0 1192.3,245.2 1196.1,242.2 1214.2,254.8" fill="#313131"/><path d="M1209.6 260.2 L1213.3 254.3" stroke="#aaa" stroke-width="1" opacity="0.22"/><polygon points="1216.1,252.3 1199.8,237.5 1201.9,233.1 1206.3,231.0 1221.1,247.3" fill="#333333"/><path d="M1215.5 251.6 L1220.4 246.7" stroke="#aaa" stroke-width="1" opacity="0.22"/><polygon points="1223.6,245.4 1211.0,227.3 1214.0,223.5 1218.8,222.4 1229.6,241.6" fill="#353535"/><path d="M1223.1 244.5 L1229.0 240.8" stroke="#aaa" stroke-width="1" opacity="0.22"/><polygon points="1232.4,240.3 1224.1,219.8 1227.9,216.8 1232.8,216.8 1239.1,237.9" fill="#363636"/><path d="M1232.1 239.3 L1238.7 237.0" stroke="#aaa" stroke-width="1" opacity="0.22"/><polygon points="1242.1,237.2 1238.6,215.5 1243.0,213.3 1247.7,214.5 1249.2,236.4" fill="#363636"/><path d="M1242.1 236.2 L1249.0 235.4" stroke="#aaa" stroke-width="1" opacity="0.22"/><polygon points="1252.2,236.4 1253.7,214.5 1258.4,213.3 1262.8,215.5 1259.3,237.2" fill="#363636"/><path d="M1252.4 235.4 L1259.3 236.2" stroke="#aaa" stroke-width="1" opacity="0.22"/><polygon points="1262.3,237.9 1268.6,216.8 1273.5,216.8 1277.3,219.8 1269.0,240.3" fill="#363636"/><path d="M1262.7 237.0 L1269.3 239.3" stroke="#aaa" stroke-width="1" opacity="0.55"/><polygon points="1271.8,241.6 1282.6,222.4 1287.4,223.5 1290.4,227.3 1277.8,245.4" fill="#353535"/><path d="M1272.4 240.8 L1278.3 244.5" stroke="#aaa" stroke-width="1" opacity="0.55"/><polygon points="1280.3,247.3 1295.1,231.0 1299.5,233.1 1301.6,237.5 1285.3,252.3" fill="#333333"/><path d="M1281.0 246.7 L1285.9 251.6" stroke="#aaa" stroke-width="1" opacity="0.55"/><polygon points="1287.2,254.8 1305.3,242.2 1309.1,245.2 1310.2,250.0 1291.0,260.8" fill="#313131"/><path d="M1288.1 254.3 L1291.8 260.2" stroke="#aaa" stroke-width="1" opacity="0.55"/><polygon points="1292.3,263.6 1312.8,255.3 1315.8,259.1 1315.8,264.0 1294.7,270.3" fill="#2e2e2e"/><path d="M1293.3 263.3 L1295.6 269.9" stroke="#aaa" stroke-width="1" opacity="0.22"/><polygon points="1295.4,273.3 1317.1,269.8 1319.3,274.2 1318.1,278.9 1296.2,280.4" fill="#2c2c2c"/>
<circle cx="1250.7" cy="281.9" r="43.5" fill="url(#gKnob)" stroke="#202020" stroke-width="1.2"/>
<circle cx="1250.7" cy="281.9" r="73" fill="none" stroke="url(#gRing)" stroke-width="4"/>
<path d="M1141 374 H1188.6 L1188.2 421.9 H1140.4 Z" stroke="#f6f6f6" stroke-width="3.1" fill="none" stroke-linejoin="round"/>
<path d="M1213.6 374 H1262 L1261.6 421.9 H1213.2 Z" stroke="#f6f6f6" stroke-width="3.1" fill="none" stroke-linejoin="round"/>
<path d="M1139.6 441.7 H1186.9 L1185.4 489.7 H1137.6 Z" stroke="#f6f6f6" stroke-width="3.1" fill="none" stroke-linejoin="round"/>
<path d="M1152.9 388.0 A15.6 15.6 0 0 1 1170.3 382.8" fill="none" stroke="#fff" stroke-width="4"/><polygon points="1175.9,386.9 1171.4,377.3 1168.2,387.7" fill="#fff"/><circle cx="1150.3" cy="391.3" r="2.3" fill="#fff"/><path d="M1179.7 391.8 A15.6 15.6 0 0 1 1175.4 409.4" fill="none" stroke="#fff" stroke-width="4"/><polygon points="1169.1,412.2 1179.7,413.1 1172.3,405.2" fill="#fff"/><circle cx="1178.1" cy="387.9" r="2.3" fill="#fff"/><path d="M1163.0 413.0 A15.6 15.6 0 0 1 1149.9 400.6" fill="none" stroke="#fff" stroke-width="4"/><polygon points="1150.6,393.7 1144.5,402.4 1155.1,399.9" fill="#fff"/><circle cx="1167.2" cy="413.7" r="2.3" fill="#fff"/>
<circle cx="1237.4" cy="397.8" r="3.8" fill="#fff"/><path d="M1217.2 378.5 L1228.4 389.2" stroke="#fff" stroke-width="3.2"/><polygon points="1233.0,393.6 1223.8,391.2 1230.6,384.4" fill="#fff"/><path d="M1257.6 378.5 L1246.4 389.2" stroke="#fff" stroke-width="3.2"/><polygon points="1241.8,393.6 1251.0,391.2 1244.2,384.4" fill="#fff"/><path d="M1217.2 417.1 L1228.4 406.4" stroke="#fff" stroke-width="3.2"/><polygon points="1233.0,402.0 1223.8,404.4 1230.6,411.2" fill="#fff"/><path d="M1257.6 417.1 L1246.4 406.4" stroke="#fff" stroke-width="3.2"/><polygon points="1241.8,402.0 1251.0,404.4 1244.2,411.2" fill="#fff"/>
<path d="M1146.5 462.1 A17.3 17.3 0 1 1 1162.8 483.0" fill="none" stroke="#f4f4f4" stroke-width="4.6"/>
<polygon points="1140.3,462.3 1154.2,461.5 1147.6,471" fill="#f4f4f4"/><circle cx="1151.7" cy="478" r="4.4" fill="#f4f4f4"/>
<path d="M1209.8 442 L1205.3 522.5" stroke="#b0b0b0" stroke-width="1.6"/><circle cx="1209.8" cy="441.9" r="3.8" fill="#a4a4a4"/>
<path d="M1218.5 511 C1228 478 1252 446 1275.5 446 C1299 446 1322 478 1332 511 Q1332 517 1322 517.5 Q1275 513 1228 517.5 Q1218.5 517 1218.5 511 Z" fill="url(#gDome)"/><path d="M1218.5 511 C1228 478 1252 446 1275.5 446 C1299 446 1322 478 1332 511 Q1332 517 1322 517.5 Q1275 513 1228 517.5 Q1218.5 517 1218.5 511 Z" fill="url(#gDomeV)"/></symbol></svg>
<!-- CENTER EDITOR -->
<div class="a" style="left:390px;top:86px;width:1030px;height:552px;border:1px solid #828790;background:#f0f0f0"></div>
<div class="a" style="left:391px;top:118px;width:1028px;height:510px;border:1px solid #8d97a6;border-top-color:#b4cbe6;background:#f0f0f0"></div>
<div class="a" style="left:390px;top:67px;width:125px;height:20px;border:1px solid #5a94c8;border-bottom:none;background:linear-gradient(#eef5fd,#dfebf9)"></div>
<div class="t" style="left:397px;top:70px">Configuration [54]</div>
<svg class="a" style="left:499px;top:71px" width="11" height="11"><path d="M1.5 1.5 L9 9 M9 1.5 L1.5 9" stroke="#222" stroke-width="1.2"/></svg>
<svg class="a" style="left:1350px;top:66px" width="70" height="16"><path d="M10.6 3 L5.6 8 L10.6 13Z" fill="#c6c6c6"/><path d="M24 3 L29 8 L24 13Z" fill="#c6c6c6"/><path d="M38 5.5 H48.5 L43.2 11Z" fill="#333"/><rect x="57.5" y="4.5" width="9" height="7.5" fill="none" stroke="#333" stroke-width="1.2"/><path d="M57 5 H67" stroke="#333" stroke-width="2"/></svg>
<svg class="a" style="left:392px;top:118px" width="1026" height="510" viewBox="392 118 1026 510"><use href="#dev" x="392" y="118" width="1026" height="510"/>
<rect x="532.6" y="227.5" width="70" height="70" fill="none" stroke="#12e612" stroke-width="2"/>
<path d="M600.6 298 V497" stroke="#fff" stroke-width="1" stroke-dasharray="4 3"/><path d="M532.5 499 H600" stroke="#fff" stroke-width="1" stroke-dasharray="4 3"/><path d="M532.5 298 V499" stroke="#fff" stroke-width="1" stroke-dasharray="4 3" opacity=".8"/>
<rect x="945.5" y="227.5" width="66.5" height="271.5" fill="none" stroke="#20e020" stroke-width="1" stroke-dasharray="4 3"/>
</svg>
<div class="bdg" style="left:592.2px;top:249.2px">59</div>
<svg class="a" style="left:392px;top:88px" width="620" height="28" viewBox="392 88 620 28">
<path d="M404.4 103 L409.8 107.6" stroke="#222" stroke-width="2.6" stroke-linecap="round"/><circle cx="400.8" cy="99" r="5.3" fill="#e4eefa" stroke="#555" stroke-width="1.3"/><path d="M398.0 99 H403.6" stroke="#223" stroke-width="1.2"/><path d="M400.8 96.2 V101.8" stroke="#223" stroke-width="1.2"/>
<path d="M427.4 103 L432.8 107.6" stroke="#222" stroke-width="2.6" stroke-linecap="round"/><circle cx="423.8" cy="99" r="5.3" fill="#e4eefa" stroke="#555" stroke-width="1.3"/><path d="M421.0 99 H426.6" stroke="#223" stroke-width="1.2"/>
<rect x="442.5" y="93.5" width="14.5" height="14.5" fill="#c9d9ea" stroke="#6f7f8f" stroke-width="1"/><path d="M449.7 95.5 V106 M444.5 100.7 H455" stroke="#445" stroke-width="1"/><path d="M447.7 97.5 L449.7 95.3 L451.7 97.5 M447.7 104 L449.7 106.2 L451.7 104 M446.5 98.7 L444.3 100.7 L446.5 102.7 M453 98.7 L455.2 100.7 L453 102.7" fill="none" stroke="#445" stroke-width="1"/>
<rect x="463.0" y="90" width="1" height="24" fill="#8c8c8c"/>
<g fill="#a9a9a9"><rect x="471" y="93.5" width="1.3" height="14.5"/><rect x="472" y="95" width="6.5" height="4.2"/><rect x="472" y="102" width="13.5" height="4.2"/><path d="M485.3 94 V108" stroke="#a9a9a9" stroke-width=".8" stroke-dasharray="1.5 1.5"/></g>
<g fill="#a9a9a9"><rect x="507.3" y="93.5" width="1.3" height="14.5"/><rect x="501" y="95" width="6.5" height="4.2"/><rect x="494" y="102" width="13.5" height="4.2"/><path d="M494.3 94 V108" stroke="#a9a9a9" stroke-width=".8" stroke-dasharray="1.5 1.5"/></g>
<g fill="#a9a9a9"><rect x="523.6" y="93.5" width="1.5" height="14.5"/><rect x="520" y="95.5" width="8.6" height="4"/><rect x="517" y="102" width="14.6" height="4.2"/></g>
<g fill="#a9a9a9"><rect x="540" y="93.3" width="14.5" height="1.3"/><rect x="541.5" y="94" width="4.2" height="13.5"/><rect x="548.5" y="94" width="4.2" height="6.5"/><path d="M540 107.5 H554.5" stroke="#a9a9a9" stroke-width=".8" stroke-dasharray="1.5 1.5"/></g>
<g fill="#a9a9a9"><rect x="563" y="106.6" width="14.5" height="1.3"/><rect x="564.5" y="94" width="4.2" height="13.5"/><rect x="571.5" y="101" width="4.2" height="6.5"/><path d="M563 93.8 H577.5" stroke="#a9a9a9" stroke-width=".8" stroke-dasharray="1.5 1.5"/></g>
<g fill="#a9a9a9"><rect x="586" y="100" width="14.5" height="1.5"/><rect x="587.5" y="93.5" width="4.2" height="14.5"/><rect x="595" y="96.5" width="4" height="8.5"/></g>
<rect x="607.0" y="90" width="1" height="24" fill="#8c8c8c"/>
<path d="M619 93 H624.6 V98.3 H628 L621.8 105 L615.6 98.3 H619 Z" fill="#7ab8f6" stroke="#1c4f9c" stroke-width="1"/><rect x="614.8" y="101.5" width="3" height="6.5" fill="#fff" stroke="#3a8a10" stroke-width="1.2"/><rect x="626.8" y="100.5" width="2.6" height="6" fill="#f4f4f4" stroke="#555" stroke-width="1"/><path d="M618.5 107 L626.5 103" stroke="#333" stroke-width=".8" stroke-dasharray="1 1"/>
<path d="M642 108 H647.6 V102.2 H651.4 L644.8 95 L638.2 102.2 H642 Z" fill="#7ab8f6" stroke="#1c4f9c" stroke-width="1"/><rect x="638" y="96" width="2.6" height="5.5" fill="#f4f4f4" stroke="#555" stroke-width="1"/><rect x="649.6" y="93.6" width="2.8" height="6" fill="#fff" stroke="#3a8a10" stroke-width="1.2"/><path d="M641 97 L649.5 94.5" stroke="#333" stroke-width=".8" stroke-dasharray="1 1"/>
<rect x="657" y="90.5" width="22.5" height="21.5" fill="#c4dcf5" stroke="#98c6f2" stroke-width="1"/><rect x="662.5" y="95.5" width="5" height="6" fill="#e8f0fa" stroke="#667" stroke-width="1"/><path d="M670 103 L675 108 M671 108.2 H675.2 V104" stroke="#e8141c" stroke-width="1.5" fill="none"/>
<rect x="683.5" y="93.5" width="9.5" height="9.5" fill="#eee" stroke="#666" stroke-width="1"/><rect x="685.5" y="95.5" width="5.5" height="5.5" fill="#dde" stroke="#777" stroke-width="1"/><path d="M692.5 102.5 L698 108 M694 108.2 H698.3 V104" stroke="#888" stroke-width="1.3" fill="none"/>
<rect x="705.0" y="90" width="1" height="24" fill="#8c8c8c"/>
<path d="M713 108.5 V101 Q713 98.5 715.5 98.5 H728" fill="none" stroke="#111" stroke-width="1.4"/><path d="M717.5 98 V95.5 M720 98 V94 M722.5 98 V95.5 M725 98 V94 M727.5 98 V93.5 M713.5 101.5 H717 M713.5 104 H716 M713.5 106.5 H717 M713.5 108.8 H716" stroke="#111" stroke-width="1"/>
<rect x="734.0" y="90" width="1" height="24" fill="#8c8c8c"/>
<rect x="738.5" y="90.5" width="22.5" height="21.5" fill="#c4dcf5" stroke="#98c6f2" stroke-width="1"/><rect x="742" y="98.5" width="3" height="3.5" fill="#f8f8f8" stroke="#667" stroke-width="1"/><rect x="751.5" y="94.5" width="3.5" height="3.5" fill="#f8f8f8" stroke="#667" stroke-width="1"/><rect x="752.5" y="103" width="3.5" height="3.5" fill="#f8f8f8" stroke="#667" stroke-width="1"/><path d="M746 100.3 H751 M751 96.5 H749 V105 H752" fill="none" stroke="#667" stroke-width="1" stroke-dasharray="1 1"/>
<path d="M765.5 107.5 V93.8 H780" fill="none" stroke="#111" stroke-width="1.3" stroke-dasharray="1.2 1.2"/><path d="M768 104.2 L772.5 100.2 V102.8 H774.6 V100 H772.2 L775.8 96 L779.5 100 H777.2 V105.6 H772.5 V108.2 Z" fill="#000"/>
<rect x="935.0" y="90" width="1" height="24" fill="#666"/>
<rect x="942" y="93" width="16" height="16" fill="#c9daf2"/><path d="M946 101.6 C946.6 95.6 952.6 95.4 951.6 101 C951.2 103.4 949.8 105 947.8 106" fill="none" stroke="#2c5fd2" stroke-width="2" stroke-linecap="round"/><path d="M942 98 L947.6 101.6 L942.4 103.8 Z" fill="#2c5fd2"/><path d="M953 100.2 H957.2 L955.1 102.6 Z" fill="#3a64a8"/>
<rect x="965" y="93" width="16" height="16" fill="#c9daf2"/><path d="M974.4 101.6 C973.8 95.6 967.8 95.4 968.8 101 C969.2 103.4 970.6 105 972.6 106" fill="none" stroke="#2c5fd2" stroke-width="2" stroke-linecap="round"/><path d="M978.4 98 L972.8 101.6 L978 103.8 Z" fill="#2c5fd2"/><path d="M976.2 101.2 H980.8 L978.5 103.8 Z" fill="#3a64a8"/>
</svg>
<div class="t" style="left:783.5px;top:94px;color:#7f7f7f;font-size:10.7px;letter-spacing:-.1px">Grid Width:</div>
<div class="a" style="left:838px;top:92px;width:80px;height:19px;border:1px solid #a6a6a6;background:#f0f0f0"></div>
<div class="t" style="left:841px;top:95px;color:#7f7f7f">10</div>
<div class="t" style="left:920px;top:94px;color:#7f7f7f;font-size:12px">px</div>
<!-- VARIABLE VIEW -->
<div class="panel" style="left:390px;top:642px;width:1030px;height:312px;background:#f0f0f0"></div>
<div class="tabhdr" style="left:391px;top:643px;width:1028px;height:20px"></div>
<div class="tab" style="left:391px;top:643px;width:196px;height:19px"></div>
<div class="t b" style="left:395px;top:646px;font-size:11.4px;letter-spacing:.06px">Variable View - EmptyProject_6</div>
<svg class="a" style="left:571px;top:647px" width="11" height="11"><path d="M1.5 1.5 L9 9 M9 1.5 L1.5 9" stroke="#222" stroke-width="1.2"/></svg>
<div class="a" style="left:587px;top:643px;width:63px;height:19px;border-right:1px solid #828790"></div>
<div class="t b" style="left:591px;top:646px;font-size:11.4px;letter-spacing:.2px">Output</div>
<div class="a" style="left:1403px;top:652px;width:10px;height:2px;background:#333"></div>
<div class="a" style="left:431px;top:676px;width:258px;height:20px;background:#fff;border:1px solid #abadb3"></div>
<svg class="a" style="left:692px;top:673px" width="14" height="14"><circle cx="5.2" cy="5.6" r="3" fill="#e8f2fc" stroke="#1a70c0" stroke-width="1.5"/><path d="M7.4 7.8 L11 11.4" stroke="#1a70c0" stroke-width="1.8"/></svg>
<div class="t b" style="left:694px;top:684px;font-size:13px;letter-spacing:.9px">Var</div>
<div class="chk" style="left:732px;top:680px"></div>
<div class="t" style="left:746px;top:679px;letter-spacing:-.1px">Hide pre-defined variables</div>
<svg class="a" style="left:400px;top:708px" width="12" height="12"><circle cx="5.5" cy="5.6" r="4.4" fill="#0b6cbd"/><path d="M3 5.6H8M5.5 3.1V8.1" stroke="#fff" stroke-width="1.5"/></svg>
<div class="t b" style="left:402px;top:718px;font-size:13px;letter-spacing:.9px;color:#000">Var</div>
<svg class="a" style="left:400px;top:738px" width="12" height="12"><circle cx="5.5" cy="5.8" r="4.4" fill="#a8a8a8"/><path d="M3 5.8H8" stroke="#fff" stroke-width="1.5"/></svg>
<div class="t b" style="left:402px;top:747px;font-size:13px;letter-spacing:.9px;color:#9c9c9c">Var</div>
<svg class="a" style="left:401px;top:769px" width="15" height="11"><path d="M1 5.5 Q7.2 -1.5 13.6 5.5 Q7.2 12.5 1 5.5 Z" fill="none" stroke="#0b6cbd" stroke-width="1.6"/><circle cx="7.3" cy="5.5" r="2.3" fill="#000"/></svg>
<div class="t b" style="left:402px;top:778px;font-size:13px;letter-spacing:.9px;color:#000">Var</div>
<svg class="a" style="left:401px;top:798px" width="24" height="26"><rect x="3.8" y="9.6" width="17" height="14.6" rx="1.2" fill="#000"/><rect x="5.2" y="13.8" width="4" height="2.6" fill="#fff"/><rect x="10.3" y="13.8" width="4" height="2.6" fill="#fff"/><rect x="15.4" y="13.8" width="4" height="2.6" fill="#fff"/><rect x="5.2" y="17.4" width="4" height="2.6" fill="#fff"/><rect x="10.3" y="17.4" width="4" height="2.6" fill="#fff"/><rect x="15.4" y="17.4" width="4" height="2.6" fill="#fff"/><rect x="5.2" y="21.0" width="4" height="2.6" fill="#fff"/><rect x="10.3" y="21.0" width="4" height="2.6" fill="#fff"/><rect x="15.4" y="21.0" width="4" height="2.6" fill="#fff"/><circle cx="5.8" cy="5.8" r="4.4" fill="#0b6cbd"/><path d="M3.3 5.8H8.3M5.8 3.3V8.3" stroke="#fff" stroke-width="1.5"/><circle cx="19" cy="5.8" r="4.4" fill="#0b6cbd"/><path d="M16.5 5.8H21.5" stroke="#fff" stroke-width="1.5"/></svg>
<svg class="a" style="left:402px;top:828px" width="12" height="12"><g stroke="#0b6cbd" stroke-width="2.2"><path d="M6 .6V11.4M.6 6H11.4M2.2 2.2L9.8 9.8M9.8 2.2L2.2 9.8"/></g><circle cx="6" cy="6" r="3.8" fill="#0b6cbd"/><circle cx="6" cy="6" r="1.9" fill="#f0f0f0"/></svg>
<div class="t b" style="left:402px;top:837px;font-size:13px;letter-spacing:.9px;color:#000">Var</div>
<div class="a" style="left:431px;top:709px;width:978px;height:233px;background:#fff;border:1px solid #a0a0a0;overflow:hidden">
<div class="t" style="left:5px;top:6px;letter-spacing:-.2px">Group Name</div>
<div class="t" style="left:165px;top:6px;letter-spacing:-.2px">Name</div>
<div class="a" style="left:159px;top:2px;width:1px;height:22px;background:#e0e0e0"></div>
<div class="t" style="left:325px;top:6px;letter-spacing:-.2px">Length (Bits)</div>
<div class="a" style="left:319px;top:2px;width:1px;height:22px;background:#e0e0e0"></div>
<div class="t" style="left:485px;top:6px;letter-spacing:-.2px">Index</div>
<div class="a" style="left:479px;top:2px;width:1px;height:22px;background:#e0e0e0"></div>
<div class="t" style="left:645px;top:6px;letter-spacing:-.2px">SubIndex</div>
<div class="a" style="left:639px;top:2px;width:1px;height:22px;background:#e0e0e0"></div>
<div class="t" style="left:805px;top:6px;letter-spacing:-.2px">Owner</div>
<div class="a" style="left:799px;top:2px;width:1px;height:22px;background:#e0e0e0"></div>
<svg class="a" style="left:75px;top:1px" width="10" height="6"><path d="M1 4.8 L5 1 L9 4.8" fill="none" stroke="#555" stroke-width="1"/></svg>
<div class="a" style="left:0;top:25px;width:800px;height:24px;background:#0078d7"></div>
<div class="a" style="left:800px;top:25px;width:159px;height:24px;background:#e1e1e1;border:1px solid #adadad;border-bottom:1px solid #909090;border-right:2px solid #9a9a9a"></div>
<svg class="a" style="left:942px;top:34px" width="12" height="8"><path d="M1.5 1.5 L6 6 L10.5 1.5" fill="none" stroke="#333" stroke-width="1.1"/></svg>
<div class="a" style="left:0;top:49px;width:959px;height:1px;background:#828282"></div>
<div class="t" style="left:1px;top:30px;color:#fff;letter-spacing:-.2px">Alarms</div>
<div class="t" style="left:161px;top:30px;color:#fff;letter-spacing:-.2px">@AlarmCurrent</div>
<div class="t" style="left:321px;top:30px;color:#fff;letter-spacing:-.2px">16</div>
<div class="t" style="left:481px;top:30px;color:#fff;letter-spacing:-.2px">0x2430</div>
<div class="t" style="left:641px;top:30px;color:#fff;letter-spacing:-.2px">0x02</div>
<div class="t" style="left:803px;top:30px;color:#efefef;letter-spacing:-.2px">PClient</div>
<div class="a" style="left:800px;top:50px;width:159px;height:24px;background:#e1e1e1;border:1px solid #adadad;border-bottom:1px solid #909090;border-right:2px solid #9a9a9a"></div>
<svg class="a" style="left:942px;top:59px" width="12" height="8"><path d="M1.5 1.5 L6 6 L10.5 1.5" fill="none" stroke="#333" stroke-width="1.1"/></svg>
<div class="a" style="left:0;top:74px;width:959px;height:1px;background:#828282"></div>
<div class="t" style="left:1px;top:55px;color:#000;letter-spacing:-.2px">Alarms</div>
<div class="t" style="left:161px;top:55px;color:#000;letter-spacing:-.2px">@AlarmCurrentPriority</div>
<div class="t" style="left:321px;top:55px;color:#000;letter-spacing:-.2px">8</div>
<div class="t" style="left:481px;top:55px;color:#000;letter-spacing:-.2px">0x2430</div>
<div class="t" style="left:641px;top:55px;color:#000;letter-spacing:-.2px">0x05</div>
<div class="t" style="left:803px;top:55px;color:#000;letter-spacing:-.2px">PClient</div>
<div class="a" style="left:800px;top:75px;width:159px;height:24px;background:#e1e1e1;border:1px solid #adadad;border-bottom:1px solid #909090;border-right:2px solid #9a9a9a"></div>
<svg class="a" style="left:942px;top:84px" width="12" height="8"><path d="M1.5 1.5 L6 6 L10.5 1.5" fill="none" stroke="#333" stroke-width="1.1"/></svg>
<div class="a" style="left:0;top:99px;width:959px;height:1px;background:#828282"></div>
<div class="t" style="left:1px;top:80px;color:#000;letter-spacing:-.2px">Alarms</div>
<div class="t" style="left:161px;top:80px;color:#000;letter-spacing:-.2px">@AlarmEnqueued</div>
<div class="t" style="left:321px;top:80px;color:#000;letter-spacing:-.2px">16</div>
<div class="t" style="left:481px;top:80px;color:#000;letter-spacing:-.2px">0x2430</div>
<div class="t" style="left:641px;top:80px;color:#000;letter-spacing:-.2px">0x04</div>
<div class="t" style="left:803px;top:80px;color:#000;letter-spacing:-.2px">PClient</div>
<div class="a" style="left:800px;top:100px;width:159px;height:24px;background:#e1e1e1;border:1px solid #adadad;border-bottom:1px solid #909090;border-right:2px solid #9a9a9a"></div>
<svg class="a" style="left:942px;top:109px" width="12" height="8"><path d="M1.5 1.5 L6 6 L10.5 1.5" fill="none" stroke="#333" stroke-width="1.1"/></svg>
<div class="a" style="left:0;top:124px;width:959px;height:1px;background:#828282"></div>
<div class="t" style="left:1px;top:105px;color:#000;letter-spacing:-.2px">Alarms</div>
<div class="t" style="left:161px;top:105px;color:#000;letter-spacing:-.2px">@AlarmShow</div>
<div class="t" style="left:321px;top:105px;color:#000;letter-spacing:-.2px">16</div>
<div class="t" style="left:481px;top:105px;color:#000;letter-spacing:-.2px">0x2430</div>
<div class="t" style="left:641px;top:105px;color:#000;letter-spacing:-.2px">0x01</div>
<div class="t" style="left:803px;top:105px;color:#000;letter-spacing:-.2px">PClient</div>
<div class="a" style="left:800px;top:125px;width:159px;height:24px;background:#e1e1e1;border:1px solid #adadad;border-bottom:1px solid #909090;border-right:2px solid #9a9a9a"></div>
<svg class="a" style="left:942px;top:134px" width="12" height="8"><path d="M1.5 1.5 L6 6 L10.5 1.5" fill="none" stroke="#333" stroke-width="1.1"/></svg>
<div class="a" style="left:0;top:149px;width:959px;height:1px;background:#828282"></div>
<div class="t" style="left:1px;top:130px;color:#000;letter-spacing:-.2px">Alarms</div>
<div class="t" style="left:161px;top:130px;color:#000;letter-spacing:-.2px">@IsAlarmEnqueued</div>
<div class="t" style="left:321px;top:130px;color:#000;letter-spacing:-.2px">16</div>
<div class="t" style="left:481px;top:130px;color:#000;letter-spacing:-.2px">0x2430</div>
<div class="t" style="left:641px;top:130px;color:#000;letter-spacing:-.2px">0x03</div>
<div class="t" style="left:803px;top:130px;color:#000;letter-spacing:-.2px">PClient</div>
<div class="a" style="left:800px;top:150px;width:159px;height:24px;background:#e1e1e1;border:1px solid #adadad;border-bottom:1px solid #909090;border-right:2px solid #9a9a9a"></div>
<svg class="a" style="left:942px;top:159px" width="12" height="8"><path d="M1.5 1.5 L6 6 L10.5 1.5" fill="none" stroke="#333" stroke-width="1.1"/></svg>
<div class="a" style="left:0;top:174px;width:959px;height:1px;background:#828282"></div>
<div class="t" style="left:1px;top:155px;color:#000;letter-spacing:-.2px">Analog Inputs</div>
<div class="t" style="left:161px;top:155px;color:#000;letter-spacing:-.2px">@AnalogInput01</div>
<div class="t" style="left:321px;top:155px;color:#000;letter-spacing:-.2px">32</div>
<div class="t" style="left:481px;top:155px;color:#000;letter-spacing:-.2px">0x2090</div>
<div class="t" style="left:641px;top:155px;color:#000;letter-spacing:-.2px">0x01</div>
<div class="t" style="left:803px;top:155px;color:#000;letter-spacing:-.2px">Hardware Daemon</div>
<div class="a" style="left:800px;top:175px;width:159px;height:24px;background:#e1e1e1;border:1px solid #adadad;border-bottom:1px solid #909090;border-right:2px solid #9a9a9a"></div>
<svg class="a" style="left:942px;top:184px" width="12" height="8"><path d="M1.5 1.5 L6 6 L10.5 1.5" fill="none" stroke="#333" stroke-width="1.1"/></svg>
<div class="a" style="left:0;top:199px;width:959px;height:1px;background:#828282"></div>
<div class="t" style="left:1px;top:180px;color:#000;letter-spacing:-.2px">Analog Inputs</div>
<div class="t" style="left:161px;top:180px;color:#000;letter-spacing:-.2px">@AnalogInput02</div>
<div class="t" style="left:321px;top:180px;color:#000;letter-spacing:-.2px">32</div>
<div class="t" style="left:481px;top:180px;color:#000;letter-spacing:-.2px">0x2090</div>
<div class="t" style="left:641px;top:180px;color:#000;letter-spacing:-.2px">0x02</div>
<div class="t" style="left:803px;top:180px;color:#000;letter-spacing:-.2px">Hardware Daemon</div>
<div class="a" style="left:800px;top:200px;width:159px;height:24px;background:#e1e1e1;border:1px solid #adadad;border-bottom:1px solid #909090;border-right:2px solid #9a9a9a"></div>
<svg class="a" style="left:942px;top:209px" width="12" height="8"><path d="M1.5 1.5 L6 6 L10.5 1.5" fill="none" stroke="#333" stroke-width="1.1"/></svg>
<div class="a" style="left:0;top:224px;width:959px;height:1px;background:#828282"></div>
<div class="t" style="left:1px;top:205px;color:#000;letter-spacing:-.2px">Analog Inputs</div>
<div class="t" style="left:161px;top:205px;color:#000;letter-spacing:-.2px">@AnalogInput03</div>
<div class="t" style="left:321px;top:205px;color:#000;letter-spacing:-.2px">32</div>
<div class="t" style="left:481px;top:205px;color:#000;letter-spacing:-.2px">0x2090</div>
<div class="t" style="left:641px;top:205px;color:#000;letter-spacing:-.2px">0x03</div>
<div class="t" style="left:803px;top:205px;color:#000;letter-spacing:-.2px">Hardware Daemon</div>
<div class="a" style="left:800px;top:225px;width:159px;height:24px;background:#e1e1e1;border:1px solid #adadad;border-bottom:1px solid #909090;border-right:2px solid #9a9a9a"></div>
<div class="a" style="left:0;top:249px;width:959px;height:1px;background:#828282"></div>
<div class="a" style="left:159px;top:25px;width:1px;height:210px;background:#828282"></div>
<div class="a" style="left:319px;top:25px;width:1px;height:210px;background:#828282"></div>
<div class="a" style="left:479px;top:25px;width:1px;height:210px;background:#828282"></div>
<div class="a" style="left:639px;top:25px;width:1px;height:210px;background:#828282"></div>
<div class="a" style="left:799px;top:25px;width:1px;height:210px;background:#828282"></div>
<div class="a" style="left:959px;top:0;width:18px;height:233px;background:#f0f0f0"></div>
<div class="a" style="left:960px;top:42px;width:15px;height:11px;background:#cdcdcd"></div>
<svg class="a" style="left:959px;top:29px" width="16" height="10"><path d="M4.5 7 L8.5 3 L12.5 7" fill="none" stroke="#404040" stroke-width="1.8"/></svg>
<svg class="a" style="left:959px;top:218px" width="16" height="10"><path d="M4.5 3 L8.5 7 L12.5 3" fill="none" stroke="#404040" stroke-width="1.8"/></svg>
</div>
<!-- PALETTE -->
<div class="panel" style="left:1424px;top:67px;width:474px;height:367px;background:#f0f0f0"></div>
<div class="tabhdr" style="left:1425px;top:68px;width:472px;height:20px"></div>
<div class="tab" style="left:1425px;top:68px;width:63px;height:19px"></div>
<div class="t b" style="left:1429px;top:71px;font-size:11.5px">Palette</div>
<svg class="a" style="left:1472px;top:72px" width="11" height="11"><path d="M1.5 1.5 L9 9 M9 1.5 L1.5 9" stroke="#222" stroke-width="1.2"/></svg>
<div class="a" style="left:1881px;top:77px;width:10px;height:2px;background:#333"></div>
<div class="a" style="left:1425px;top:88px;width:455px;height:16px;background:#d6d6d6;overflow:hidden">
<div class="t b" style="left:18px;top:1px;font-size:11.4px;letter-spacing:.15px">Container</div></div>
<svg class="a" style="left:1430px;top:92px" width="9" height="9"><rect x=".5" y=".5" width="8" height="8" rx="1" fill="#fafafa" stroke="#9a9a9a"/><path d="M2 4.5H7" stroke="#3a50a0" stroke-width="1.2"/></svg>
<div class="a" style="left:1425px;top:144px;width:455px;height:15px;background:#d6d6d6;overflow:hidden">
<div class="t b" style="left:18px;top:0px;font-size:11.4px;letter-spacing:.15px">Common Controls</div></div>
<svg class="a" style="left:1430px;top:148px" width="9" height="9"><rect x=".5" y=".5" width="8" height="8" rx="1" fill="#fafafa" stroke="#9a9a9a"/><path d="M2 4.5H7" stroke="#3a50a0" stroke-width="1.2"/></svg>
<div class="a" style="left:1425px;top:238px;width:455px;height:15px;background:#d6d6d6;overflow:hidden">
<div class="t b" style="left:18px;top:0px;font-size:11.4px;letter-spacing:.15px">Measurement Controls</div></div>
<svg class="a" style="left:1430px;top:242px" width="9" height="9"><rect x=".5" y=".5" width="8" height="8" rx="1" fill="#fafafa" stroke="#9a9a9a"/><path d="M2 4.5H7" stroke="#3a50a0" stroke-width="1.2"/></svg>
<div class="a" style="left:1425px;top:371px;width:455px;height:15px;background:#d6d6d6;overflow:hidden">
<div class="t b" style="left:18px;top:0px;font-size:11.4px;letter-spacing:.15px">Lamps and Switches</div></div>
<svg class="a" style="left:1430px;top:375px" width="9" height="9"><rect x=".5" y=".5" width="8" height="8" rx="1" fill="#fafafa" stroke="#9a9a9a"/><path d="M2 4.5H7" stroke="#3a50a0" stroke-width="1.2"/></svg>
<div class="a" style="left:1425px;top:426px;width:455px;height:7px;background:#d6d6d6;overflow:hidden">
<div class="t b" style="left:18px;top:0px;font-size:11.4px;letter-spacing:.15px">Special Controls</div></div>
<div class="a" style="left:1430px;top:430px;width:9px;height:3px;border:1px solid #9a9a9a;border-bottom:none;background:#fafafa"></div>
<div class="a" style="left:1880px;top:88px;width:16px;height:345px;background:#f0f0f0"></div><div class="a" style="left:1881px;top:105px;width:15px;height:303px;background:#cdcdcd"></div><svg class="a" style="left:1880px;top:92px" width="16" height="10"><path d="M4.5 7 L8.5 3 L12.5 7" fill="none" stroke="#404040" stroke-width="1.5"/></svg><svg class="a" style="left:1880px;top:420px" width="16" height="10"><path d="M4.5 3 L8.5 7 L12.5 3" fill="none" stroke="#404040" stroke-width="1.5"/></svg>
<svg class="a" style="left:1427px;top:106px" width="34" height="34" viewBox="0 0 34 34"><rect x="2.2" y="5.2" width="29.6" height="23.6" fill="#f0f0f0" stroke="#000" stroke-width="2.6"/><rect x="3.5" y="6.5" width="16" height="9.2" fill="#0b6cbd"/></svg>
<div class="t" style="left:1463px;top:116px;letter-spacing:-.2px">Frame</div>
<svg class="a" style="left:1518px;top:106px" width="34" height="34" viewBox="0 0 34 34"><rect x="1" y="3" width="32" height="8.6" fill="#0b6cbd"/><rect x="3.2" y="12.6" width="27.6" height="17.6" fill="#000"/><rect x="11.5" y="19" width="11" height="4.4" rx="2.2" fill="#fff"/></svg>
<div class="t" style="left:1554px;top:116px;letter-spacing:-.2px">Container</div>
<svg class="a" style="left:1427px;top:161px" width="34" height="34" viewBox="0 0 34 34"><path d="M14 2.2 H27 Q31 2.2 31 6.2 V27.8 Q31 31.8 27 31.8 H14" fill="none" stroke="#000" stroke-width="2.6"/><path d="M1 13.5 H13.5 V8.5 L27.5 17 L13.5 25.5 V20.5 H1 Z" fill="#0b6cbd"/></svg>
<div class="t" style="left:1463px;top:171px;letter-spacing:-.2px">Button</div>
<svg class="a" style="left:1540px;top:161px" width="34" height="34" viewBox="0 0 34 34"><rect x="1" y="3.5" width="32" height="27" fill="#000"/><rect x="2.2" y="6.6" width="29.6" height="20.8" fill="#0b6cbd"/><text x="17" y="25.5" font-family="Liberation Serif,serif" font-weight="bold" font-size="23" fill="#fff" text-anchor="middle">T</text></svg>
<div class="t" style="left:1576px;top:171px;letter-spacing:-.2px">String Field</div>
<svg class="a" style="left:1651px;top:161px" width="34" height="34" viewBox="0 0 34 34"><g font-family="Liberation Sans,sans-serif" font-size="11.5" text-anchor="middle"><rect x="10.7" y="1.7" width="14" height="13.6" rx="2" fill="#f6f6f6" stroke="#222" stroke-width="1"/><text x="17.7" y="12.7" fill="#222">2</text><rect x="2.4" y="18.9" width="14" height="13.6" rx="2" fill="#f6f6f6" stroke="#222" stroke-width="1"/><text x="9.4" y="29.9" fill="#222">3</text><rect x="19.7" y="18.9" width="14" height="13.6" rx="2" fill="#0b6cbd" stroke="#134" stroke-width="1"/><text x="26.7" y="29.9" fill="#fff">4</text></g></svg>
<div class="t" style="left:1689px;top:171px;letter-spacing:-.2px">Numeric Field</div>
<svg class="a" style="left:1766px;top:161px" width="34" height="34" viewBox="0 0 34 34"><rect x="2.2" y="5.2" width="29.6" height="23.8" fill="#f4f4f4" stroke="#000" stroke-width="2.4"/><path d="M5 26 L12.5 11 L18.5 20.5 L22.5 17 L29 26 Z" fill="#0b6cbd"/><circle cx="25.8" cy="11.2" r="3" fill="#000"/></svg>
<div class="t" style="left:1802px;top:171px;letter-spacing:-.2px">Picture Graphic</div>
<svg class="a" style="left:1427px;top:200px" width="34" height="34" viewBox="0 0 34 34"><rect x="1" y="2" width="32" height="30" rx="2" fill="#000"/><rect x="3.0" y="8.3" width="7.8" height="6" fill="#fff"/><rect x="13.1" y="8.3" width="7.8" height="6" fill="#fff"/><rect x="23.2" y="8.3" width="7.8" height="6" fill="#fff"/><rect x="3.0" y="16.3" width="7.8" height="6" fill="#0b6cbd"/><rect x="13.1" y="16.3" width="7.8" height="6" fill="#0b6cbd"/><rect x="23.2" y="16.3" width="7.8" height="6" fill="#0b6cbd"/><rect x="3.0" y="24.3" width="7.8" height="6" fill="#fff"/><rect x="13.1" y="24.3" width="7.8" height="6" fill="#fff"/><rect x="23.2" y="24.3" width="7.8" height="6" fill="#fff"/></svg>
<div class="t" style="left:1463px;top:210px;letter-spacing:-.2px">Table</div>
<svg class="a" style="left:1540px;top:200px" width="34" height="34" viewBox="0 0 34 34"><circle cx="4.2" cy="8.7" r="3" fill="#000"/><rect x="9.5" y="6.7" width="23.5" height="4" rx="2" fill="#000"/><circle cx="4.2" cy="17" r="3" fill="#0b6cbd"/><rect x="9.5" y="15" width="23.5" height="4" rx="2" fill="#0b6cbd"/><circle cx="4.2" cy="25.3" r="3" fill="#000"/><rect x="9.5" y="23.3" width="23.5" height="4" rx="2" fill="#000"/></svg>
<div class="t" style="left:1576px;top:210px;letter-spacing:-.2px">List</div>
<svg class="a" style="left:1427px;top:255px" width="34" height="34" viewBox="0 0 34 34"><polygon points="28.0,17.8 33.0,18.1 31.9,22.9 27.2,21.0" fill="#0b6cbd"/><polygon points="26.5,22.5 30.9,25.0 27.8,28.8 24.5,25.1" fill="#0b6cbd"/><polygon points="23.2,26.1 26.1,30.2 21.7,32.3 20.2,27.5" fill="#0b6cbd"/><polygon points="18.7,27.9 19.4,32.8 14.6,32.8 15.3,27.9" fill="#0b6cbd"/><polygon points="13.8,27.5 12.3,32.3 7.9,30.2 10.8,26.1" fill="#0b6cbd"/><polygon points="9.5,25.1 6.2,28.8 3.1,25.0 7.5,22.5" fill="#0b6cbd"/><polygon points="6.8,21.0 2.1,22.9 1.0,18.1 6.0,17.8" fill="#0b6cbd"/><polygon points="6.0,16.2 1.0,15.9 2.1,11.1 6.8,13.0" fill="#0b6cbd"/><polygon points="7.5,11.5 3.1,9.0 6.2,5.2 9.5,8.9" fill="#0b6cbd"/><polygon points="10.8,7.9 7.9,3.8 12.3,1.7 13.8,6.5" fill="#0b6cbd"/><polygon points="15.3,6.1 14.6,1.2 19.4,1.2 18.7,6.1" fill="#0b6cbd"/><polygon points="20.2,6.5 21.7,1.7 26.1,3.8 23.2,7.9" fill="#0b6cbd"/><polygon points="24.5,8.9 27.8,5.2 30.9,9.0 26.5,11.5" fill="#0b6cbd"/><polygon points="27.2,13.0 31.9,11.1 33.0,15.9 28.0,16.2" fill="#0b6cbd"/><circle cx="19.6" cy="20.2" r="3.4" fill="#000"/><polygon points="10.4,12.8 22.2,17.8 17.2,22.6" fill="#000"/></svg>
<div class="t" style="left:1463px;top:265px;letter-spacing:-.2px">Meter</div>
<svg class="a" style="left:1578px;top:255px" width="34" height="34" viewBox="0 0 34 34"><polygon points="28.0,17.8 33.0,18.1 31.9,22.9 27.2,21.0" fill="#0b6cbd"/><polygon points="26.5,22.5 30.9,25.0 27.8,28.8 24.5,25.1" fill="#0b6cbd"/><polygon points="23.2,26.1 26.1,30.2 21.7,32.3 20.2,27.5" fill="#0b6cbd"/><polygon points="18.7,27.9 19.4,32.8 14.6,32.8 15.3,27.9" fill="#0b6cbd"/><polygon points="13.8,27.5 12.3,32.3 7.9,30.2 10.8,26.1" fill="#0b6cbd"/><polygon points="9.5,25.1 6.2,28.8 3.1,25.0 7.5,22.5" fill="#0b6cbd"/><polygon points="6.8,21.0 2.1,22.9 1.0,18.1 6.0,17.8" fill="#0b6cbd"/><polygon points="6.0,16.2 1.0,15.9 2.1,11.1 6.8,13.0" fill="#0b6cbd"/><polygon points="7.5,11.5 3.1,9.0 6.2,5.2 9.5,8.9" fill="#0b6cbd"/><polygon points="10.8,7.9 7.9,3.8 12.3,1.7 13.8,6.5" fill="#0b6cbd"/><polygon points="15.3,6.1 14.6,1.2 19.4,1.2 18.7,6.1" fill="#0b6cbd"/><polygon points="20.2,6.5 21.7,1.7 26.1,3.8 23.2,7.9" fill="#0b6cbd"/><polygon points="24.5,8.9 27.8,5.2 30.9,9.0 26.5,11.5" fill="#0b6cbd"/><polygon points="27.2,13.0 31.9,11.1 33.0,15.9 28.0,16.2" fill="#0b6cbd"/><circle cx="19.6" cy="20.2" r="3.4" fill="#000"/><polygon points="10.4,12.8 22.2,17.8 17.2,22.6" fill="#000"/></svg>
<div class="t" style="left:1614px;top:265px;letter-spacing:-.2px">Gauge</div>
<svg class="a" style="left:1729px;top:255px" width="34" height="34" viewBox="0 0 34 34"><polygon points="8.7,24.2 4.9,27.5 2.2,23.0 6.8,21.1" fill="#0b6cbd"/><polygon points="6.3,19.7 1.5,20.9 1.1,15.6 6.0,16.1" fill="#0b6cbd"/><polygon points="6.3,14.5 1.4,13.4 3.4,8.5 7.7,11.2" fill="#0b6cbd"/><polygon points="8.6,9.9 4.8,6.7 8.7,3.3 11.3,7.6" fill="#0b6cbd"/><polygon points="12.7,6.9 10.8,2.3 15.9,1.0 16.2,6.0" fill="#0b6cbd"/><polygon points="17.8,6.0 18.1,1.0 23.2,2.3 21.3,6.9" fill="#0b6cbd"/><polygon points="22.7,7.6 25.3,3.3 29.2,6.7 25.4,9.9" fill="#0b6cbd"/><polygon points="26.3,11.2 30.6,8.5 32.6,13.4 27.7,14.5" fill="#0b6cbd"/><polygon points="28.0,16.1 32.9,15.6 32.5,20.9 27.7,19.7" fill="#0b6cbd"/><polygon points="27.2,21.1 31.8,23.0 29.1,27.5 25.3,24.2" fill="#0b6cbd"/><circle cx="19.6" cy="20.2" r="3.4" fill="#000"/><polygon points="10.4,12.8 22.2,17.8 17.2,22.6" fill="#000"/></svg>
<div class="t" style="left:1765px;top:265px;letter-spacing:-.2px">Gauge 270</div>
<svg class="a" style="left:1427px;top:295px" width="34" height="34" viewBox="0 0 34 34"><polygon points="6.0,20.3 1.0,19.9 2.2,15.0 6.8,16.9" fill="#0b6cbd"/><polygon points="7.4,15.6 3.1,13.1 6.2,9.2 9.6,12.9" fill="#0b6cbd"/><polygon points="10.7,12.0 7.9,7.8 12.4,5.7 13.8,10.5" fill="#0b6cbd"/><polygon points="15.3,10.1 14.5,5.2 19.5,5.2 18.7,10.1" fill="#0b6cbd"/><polygon points="20.2,10.5 21.6,5.7 26.1,7.8 23.3,12.0" fill="#0b6cbd"/><polygon points="24.4,12.9 27.8,9.2 30.9,13.1 26.6,15.6" fill="#0b6cbd"/><polygon points="27.2,16.9 31.8,15.0 33.0,19.9 28.0,20.3" fill="#0b6cbd"/><circle cx="19.6" cy="24.2" r="3.4" fill="#000"/><polygon points="10.4,16.8 22.2,21.8 17.2,26.6" fill="#000"/></svg>
<div class="t" style="left:1463px;top:304px;letter-spacing:-.2px">Gauge 180</div>
<svg class="a" style="left:1578px;top:295px" width="34" height="34" viewBox="0 0 34 34"><polygon points="8.0,9.0 8.0,3.0 13.3,3.6 11.9,9.5" fill="#0b6cbd"/><polygon points="13.6,9.9 15.5,4.3 20.4,6.6 17.1,11.7" fill="#0b6cbd"/><polygon points="18.5,12.7 22.2,7.9 26.1,11.8 21.3,15.5" fill="#0b6cbd"/><polygon points="22.3,16.9 27.4,13.6 29.7,18.5 24.1,20.4" fill="#0b6cbd"/><polygon points="24.5,22.1 30.4,20.7 31.0,26.0 25.0,26.0" fill="#0b6cbd"/><circle cx="15.6" cy="23.2" r="3.4" fill="#000"/><polygon points="6.4,15.8 18.2,20.8 13.2,25.6" fill="#000"/></svg>
<div class="t" style="left:1614px;top:304px;letter-spacing:-.2px">Gauge 90</div>
<svg class="a" style="left:1729px;top:292px" width="34" height="34" viewBox="0 0 34 34"><path d="M2.2 26.5 A14.8 14.8 0 0 1 31.8 26.5 L25 26.5 A8 8 0 0 0 9 26.5 Z" fill="#f4f4f4" stroke="#000" stroke-width="2" stroke-linejoin="round"/><path d="M2.8 25.5 A14.2 14.2 0 0 1 17 12.3 L17 18.5 A8 8 0 0 0 9 25.5 Z" fill="#0b6cbd"/></svg>
<div class="t" style="left:1765px;top:304px;letter-spacing:-.2px">Arched Bargraph</div>
<svg class="a" style="left:1427px;top:333px" width="34" height="34" viewBox="0 0 34 34"><path d="M2 1 V32 H32" fill="none" stroke="#000" stroke-width="2"/><rect x="5" y="14" width="7.5" height="15.5" fill="#000"/><rect x="14" y="4" width="7" height="25.5" fill="#0b6cbd"/><rect x="22.5" y="8.5" width="8" height="21" fill="#000"/></svg>
<div class="t" style="left:1463px;top:343px;letter-spacing:-.2px">Linear Bargraph</div>
<svg class="a" style="left:1578px;top:333px" width="34" height="34" viewBox="0 0 34 34"><path d="M2 2 V31 H33" fill="none" stroke="#000" stroke-width="2.2"/><path d="M6 23.5 L12.5 15.5 L19.5 18.5 L27.5 8" fill="none" stroke="#0b6cbd" stroke-width="3.2"/><path d="M23.5 6 L32 4.5 L30.5 13 Z" fill="#0b6cbd"/></svg>
<div class="t" style="left:1614px;top:343px;letter-spacing:-.2px">Graph</div>
<svg class="a" style="left:1427px;top:388px" width="34" height="34" viewBox="0 0 34 34"><path d="M1 10.5 H10 M1 14 H10 M1 17.5 H10 M1 21 H10" stroke="#000" stroke-width="1.3"/><path d="M12.5 7.5 H21 A9.5 9.5 0 0 1 21 26.5 H12.5 Z M17.5 7.5 V26.5" fill="none" stroke="#0b6cbd" stroke-width="2.2"/></svg>
<div class="t" style="left:1463px;top:398px;letter-spacing:-.2px">Lamp</div>
<svg class="a" style="left:1540px;top:388px" width="34" height="34" viewBox="0 0 34 34"><path d="M10.5 7.6 A13 13 0 1 0 23.5 7.6" fill="none" stroke="#0b6cbd" stroke-width="2.6"/><path d="M17 1.5 V15" stroke="#000" stroke-width="2.8"/></svg>
<div class="t" style="left:1576px;top:398px;letter-spacing:-.2px">Power Switch</div>
<svg class="a" style="left:1652px;top:388px" width="34" height="34" viewBox="0 0 34 34"><circle cx="17" cy="17" r="14" fill="#f4f4f4" stroke="#0b6cbd" stroke-width="3"/><circle cx="17" cy="17" r="7.4" fill="#000"/></svg>
<div class="t" style="left:1689px;top:398px;letter-spacing:-.2px">Push Switch</div>
<svg class="a" style="left:1766px;top:388px" width="34" height="34" viewBox="0 0 34 34"><rect x="1.5" y="8" width="31" height="18" rx="2" fill="#f8f8f8" stroke="#0b6cbd" stroke-width="1.6"/><rect x="17" y="8" width="15.5" height="18" fill="#0b6cbd"/><rect x="23.5" y="15" width="3.6" height="4" fill="#123"/></svg>
<div class="t" style="left:1802px;top:398px;letter-spacing:-.2px">Rocker Switch</div>
<!-- PROPERTIES -->
<div class="panel" style="left:1424px;top:438px;width:474px;height:516px;background:#f0f0f0"></div>
<div class="tabhdr" style="left:1425px;top:439px;width:472px;height:20px"></div>
<div class="tab" style="left:1425px;top:439px;width:168px;height:19px"></div>
<div class="t b" style="left:1430px;top:442px;font-size:11.3px;letter-spacing:0">SoftKey 1 [61] - Properties</div>
<svg class="a" style="left:1577px;top:443px" width="11" height="11"><path d="M1.5 1.5 L9 9 M9 1.5 L1.5 9" stroke="#222" stroke-width="1.2"/></svg>
<div class="a" style="left:1881px;top:448px;width:10px;height:2px;background:#333"></div>
<div class="a" style="left:1427px;top:461px;width:62px;height:18px;background:#cce4f7;border:1px solid #9ccff8"></div>
<div class="t" style="left:1433px;top:463px">Properties</div>
<div class="t" style="left:1504px;top:463px">Events</div>
<div class="a" style="left:1425px;top:482px;width:472px;height:1px;background:#a0a0a0"></div>
<div class="a" style="left:1425px;top:483px;width:454px;height:405px;background:#fff;overflow:hidden">
<div class="a" style="left:0;top:8px;width:455px;height:1px;background:#d4d4d4"></div>
<div class="t" style="left:2px;top:-7px;color:#8e8e8e;letter-spacing:-.05px">Y Location</div>
<div class="t" style="left:230.6px;top:-7px;color:#8e8e8e;letter-spacing:-.15px">0</div>
<div class="a" style="left:0;top:26px;width:455px;height:1px;background:#d4d4d4"></div>
<div class="t" style="left:2px;top:11px;color:#8e8e8e;letter-spacing:-.05px">Width</div>
<div class="t" style="left:230.6px;top:11px;color:#8e8e8e;letter-spacing:-.15px">68</div>
<div class="a" style="left:0;top:44px;width:455px;height:1px;background:#d4d4d4"></div>
<div class="t" style="left:2px;top:29px;color:#8e8e8e;letter-spacing:-.05px">Height</div>
<div class="t" style="left:230.6px;top:29px;color:#8e8e8e;letter-spacing:-.15px">68</div>
<div class="a" style="left:0;top:45px;width:455px;height:18px;background:#d6d6d6"></div>
<svg class="a" style="left:1px;top:49px" width="9" height="9"><rect x=".5" y=".5" width="8" height="8" rx="1" fill="#fafafa" stroke="#9a9a9a"/><path d="M2 4.5H7" stroke="#3a50a0" stroke-width="1.2"/></svg>
<div class="t" style="left:12px;top:47px;letter-spacing:0">Variable References</div>
<div class="a" style="left:0;top:80px;width:455px;height:1px;background:#d4d4d4"></div>
<div class="t" style="left:2px;top:65px;color:#000;letter-spacing:-.05px">Variable Reference</div>
<div class="a" style="left:440px;top:64px;width:13px;height:15px;background:#e6e6e6;border:1px solid #adadad;font-size:10px;line-height:16px;text-align:center;letter-spacing:0;overflow:hidden">...</div>
<div class="t" style="left:230.6px;top:64px;color:#000;letter-spacing:-.15px">None</div>
<div class="a" style="left:0;top:81px;width:455px;height:18px;background:#d6d6d6"></div>
<svg class="a" style="left:1px;top:85px" width="9" height="9"><rect x=".5" y=".5" width="8" height="8" rx="1" fill="#fafafa" stroke="#9a9a9a"/><path d="M2 4.5H7" stroke="#3a50a0" stroke-width="1.2"/></svg>
<div class="t" style="left:12px;top:83px;letter-spacing:0">Skin Properties</div>
<div class="a" style="left:0;top:116px;width:455px;height:1px;background:#d4d4d4"></div>
<div class="t" style="left:2px;top:101px;color:#000;letter-spacing:-.05px">Draw Border</div>
<div class="chk" style="left:232px;top:101px"></div>
<div class="a" style="left:0;top:134px;width:455px;height:1px;background:#d4d4d4"></div>
<div class="t" style="left:2px;top:119px;color:#000;letter-spacing:-.05px">Border Width</div>
<div class="t" style="left:230.6px;top:118px;color:#000;letter-spacing:-.15px">3</div>
<div class="a" style="left:0;top:152px;width:455px;height:1px;background:#d4d4d4"></div>
<div class="t" style="left:2px;top:137px;color:#000;letter-spacing:-.05px">Border Image</div>
<div class="a" style="left:440px;top:136px;width:13px;height:15px;background:#e6e6e6;border:1px solid #adadad;font-size:10px;line-height:16px;text-align:center;letter-spacing:0;overflow:hidden">...</div>
<div class="a" style="left:0;top:170px;width:455px;height:1px;background:#d4d4d4"></div>
<div class="t" style="left:2px;top:155px;color:#000;letter-spacing:-.05px">Border State</div>
<div class="a" style="left:228px;top:153px;width:226px;height:17px;background:#e3e3e3;border:1px solid #adadad"></div>
<svg class="a" style="left:439px;top:159px" width="12" height="8"><path d="M1.5 1.5 L6 6 L10.5 1.5" fill="none" stroke="#333" stroke-width="1.1"/></svg>
<div class="t" style="left:230.6px;top:154px;color:#000;letter-spacing:-.15px">Enabled Without Focus</div>
<div class="a" style="left:0;top:188px;width:455px;height:1px;background:#d4d4d4"></div>
<div class="t" style="left:2px;top:173px;color:#000;letter-spacing:-.05px">Border Profile</div>
<div class="a" style="left:440px;top:172px;width:13px;height:15px;background:#e6e6e6;border:1px solid #adadad;font-size:10px;line-height:16px;text-align:center;letter-spacing:0;overflow:hidden">...</div>
<div class="t" style="left:230.6px;top:172px;color:#000;letter-spacing:-.15px">Border Profile</div>
<div class="a" style="left:0;top:206px;width:455px;height:1px;background:#d4d4d4"></div>
<div class="t" style="left:2px;top:191px;color:#000;letter-spacing:-.05px">Transparent Border Color</div>
<div class="a" style="left:231px;top:192px;width:11px;height:11px;background:#0000ff;border:1px solid #223"></div>
<div class="a" style="left:440px;top:190px;width:13px;height:15px;background:#e6e6e6;border:1px solid #adadad;font-size:10px;line-height:16px;text-align:center;letter-spacing:0;overflow:hidden">...</div>
<div class="t" style="left:248.6px;top:191px;color:#000;letter-spacing:-.15px">255,0,0,255</div>
<div class="a" style="left:0;top:207px;width:455px;height:18px;background:#d6d6d6"></div>
<svg class="a" style="left:1px;top:211px" width="9" height="9"><rect x=".5" y=".5" width="8" height="8" rx="1" fill="#fafafa" stroke="#9a9a9a"/><path d="M2 4.5H7" stroke="#3a50a0" stroke-width="1.2"/></svg>
<div class="t" style="left:12px;top:209px;letter-spacing:0">Visibility</div>
<div class="a" style="left:0;top:242px;width:455px;height:1px;background:#d4d4d4"></div>
<div class="t" style="left:2px;top:227px;color:#000;letter-spacing:-.05px">Visibility</div>
<div class="chk" style="left:232px;top:227px"></div>
<div class="a" style="left:0;top:260px;width:455px;height:1px;background:#d4d4d4"></div>
<div class="t" style="left:2px;top:245px;color:#8e8e8e;letter-spacing:-.05px">Visibility Bit</div>
<div class="t" style="left:230.6px;top:245px;color:#8e8e8e;letter-spacing:-.15px">Value not set</div>
<div class="a" style="left:0;top:261px;width:455px;height:18px;background:#d6d6d6"></div>
<svg class="a" style="left:1px;top:265px" width="9" height="9"><rect x=".5" y=".5" width="8" height="8" rx="1" fill="#fafafa" stroke="#9a9a9a"/><path d="M2 4.5H7" stroke="#3a50a0" stroke-width="1.2"/></svg>
<div class="t" style="left:12px;top:263px;letter-spacing:0">Softkey Specific</div>
<div class="a" style="left:0;top:296px;width:455px;height:1px;background:#d4d4d4"></div>
<div class="t" style="left:2px;top:281px;color:#8e8e8e;letter-spacing:-.05px">Key Number</div>
<div class="t" style="left:230.6px;top:281px;color:#8e8e8e;letter-spacing:-.15px">200</div>
<div class="a" style="left:0;top:314px;width:455px;height:1px;background:#d4d4d4"></div>
<div class="t" style="left:2px;top:299px;color:#000;letter-spacing:-.05px">Latching</div>
<div class="chk" style="left:232px;top:299px"></div>
<div class="a" style="left:0;top:332px;width:455px;height:1px;background:#d4d4d4"></div>
<div class="t" style="left:2px;top:317px;color:#000;letter-spacing:-.05px">Pressed State</div>
<div class="chk" style="left:232px;top:317px"></div>
<div class="a" style="left:0;top:350px;width:455px;height:1px;background:#d4d4d4"></div>
<div class="t" style="left:2px;top:335px;color:#8e8e8e;letter-spacing:-.05px">Pressed Object ID</div>
<div class="t" style="left:230.6px;top:335px;color:#8e8e8e;letter-spacing:-.15px">-1</div>
<div class="a" style="left:0;top:368px;width:455px;height:1px;background:#d4d4d4"></div>
<div class="t" style="left:2px;top:353px;color:#8e8e8e;letter-spacing:-.05px">Released Object ID</div>
<div class="t" style="left:230.6px;top:353px;color:#8e8e8e;letter-spacing:-.15px">-1</div>
<div class="a" style="left:0;top:386px;width:455px;height:1px;background:#d4d4d4"></div>
<div class="t b" style="left:2px;top:371px;color:#1cb0f0;font-size:11.5px;letter-spacing:.1px">Pressed Image</div>
<div class="a" style="left:440px;top:370px;width:13px;height:15px;background:#e6e6e6;border:1px solid #adadad;font-size:10px;line-height:16px;text-align:center;letter-spacing:0;overflow:hidden">...</div>
<div class="t" style="left:230.6px;top:370px;color:#000;letter-spacing:-.45px">BUTTON_BACK_X_68_68.png</div>
<div class="a" style="left:0;top:404px;width:455px;height:1px;background:#d4d4d4"></div>
<div class="t b" style="left:2px;top:389px;color:#1cb0f0;font-size:11.5px;letter-spacing:.1px">Released Image</div>
<div class="a" style="left:440px;top:388px;width:13px;height:15px;background:#e6e6e6;border:1px solid #adadad;font-size:10px;line-height:16px;text-align:center;letter-spacing:0;overflow:hidden">...</div>
<div class="t" style="left:230.6px;top:388px;color:#000;letter-spacing:-.45px">BUTTON_BACK_68_68.png</div>
<div class="a" style="left:227px;top:0;width:1px;height:405px;background:#d4d4d4"></div>
<div class="a" style="left:227px;top:45px;width:1px;height:18px;background:#d6d6d6"></div>
<div class="a" style="left:227px;top:81px;width:1px;height:18px;background:#d6d6d6"></div>
<div class="a" style="left:227px;top:207px;width:1px;height:18px;background:#d6d6d6"></div>
<div class="a" style="left:227px;top:261px;width:1px;height:18px;background:#d6d6d6"></div>
</div>
<div class="a" style="left:1880px;top:483px;width:16px;height:405px;background:#f0f0f0"></div><div class="a" style="left:1881px;top:573px;width:15px;height:298px;background:#cdcdcd"></div><svg class="a" style="left:1880px;top:487px" width="16" height="10"><path d="M4.5 7 L8.5 3 L12.5 7" fill="none" stroke="#404040" stroke-width="1.5"/></svg><svg class="a" style="left:1880px;top:875px" width="16" height="10"><path d="M4.5 3 L8.5 7 L12.5 3" fill="none" stroke="#404040" stroke-width="1.5"/></svg>
<div class="a" style="left:1425px;top:888px;width:472px;height:1px;background:#d4d4d4"></div>
<div class="a" style="left:1425px;top:892px;width:472px;height:1px;background:#8c8c8c"></div>
<div class="t b" style="left:1428px;top:900px;font-size:11px">SoftKey 1 [61]</div>
<div class="a" style="left:1876px;top:898px;width:15px;height:15px;border-radius:50%;background:#9a9a9a;color:#b8b8b8;font-weight:bold;font-size:11px;line-height:15px;text-align:center">?</div>
<div class="bdg" style="left:1624.2px;top:794px">62</div>
<div class="bdg" style="left:1589px;top:847px">61</div>
<div class="bdg" style="left:1618px;top:866px">60</div>
</body></html>
